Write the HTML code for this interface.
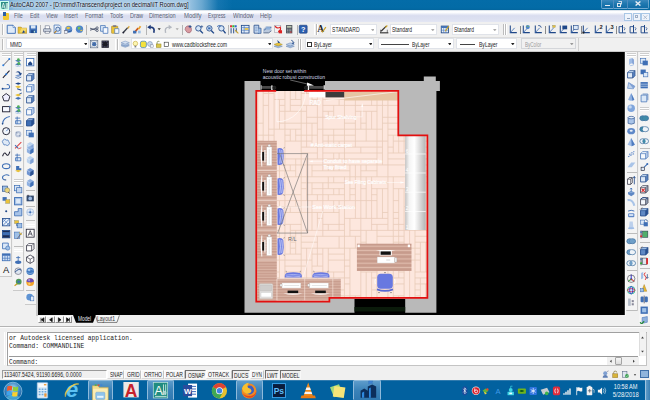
<!DOCTYPE html><html><head><meta charset="utf-8"><title>AutoCAD 2007</title><style>
html,body{margin:0;padding:0}
body{width:650px;height:400px;overflow:hidden;position:relative;background:#f0f0f0;font-family:"Liberation Sans",sans-serif;font-size:6px;color:#222}
.a{position:absolute}
.t{position:absolute;white-space:nowrap;line-height:1;transform-origin:0 0}
.cb{position:absolute;background:#fff;border:0.5px solid #b9bec9;box-sizing:border-box}
.sep{position:absolute;width:1px;background:#b8b8b8}
.sb{position:absolute;top:369.8px;height:9px;box-sizing:border-box;font-size:6.2px;line-height:8.5px;text-align:center;color:#222;letter-spacing:-0.2px}
.up{border:0.5px solid #fdfdfd;border-right-color:#c4c4c4;border-bottom-color:#d8d8d8;background:#f7f7f7}
.dn{border:0.7px solid #6e6e6e;border-right-color:#f8f8f8;border-bottom-color:#f8f8f8;background:#eeeeee}
</style></head><body>
<div class="a" style="left:0px;top:0px;width:650px;height:10.4px;background:linear-gradient(#046ca8,#036ba6 80%,#03659e)"></div>
<div class="a" style="left:0px;top:0px;width:232px;height:10.5px;background:linear-gradient(90deg,#4f92c6 0,#8ebcde 6%,#a6cae6 20%,#a6cae6 80%,rgba(140,188,222,.75) 87%,rgba(60,140,196,.3) 94%,rgba(3,107,166,0) 100%)"></div>
<div class="a" style="left:0px;top:0.5px;width:9px;height:9.5px;background:#2f8f86;border:0.5px solid #cfe;box-sizing:border-box"></div>
<svg class="a" style="left:0;top:.5px" width="9" height="9.500" viewBox="0 0 9 9.5"><path d="M1.600 8l1.800-6l1.800 6M2.300 6h2.200M6.300 2v6M7.600 2v6" stroke="#e8f6f2" stroke-width=".8" fill="none"/></svg>
<div class="t" style="left:10.2px;top:2.1px;font-size:6.4px;color:#0a0a14;transform:scaleX(0.896);text-shadow:0 0 2px rgba(255,255,255,.9),0 0 3px rgba(255,255,255,.7);">AutoCAD 2007 - [D:\mmd\Transcend\project on decimal\IT Room.dwg]</div>
<div class="a" style="left:600.5px;top:0px;width:48.5px;height:9px;background:linear-gradient(#3a88bc,#1f78b0 45%,#106ca6);border:0.5px solid rgba(160,200,230,.55);border-top:none;border-radius:0 0 2px 2px;box-sizing:border-box"></div>
<div class="a" style="left:613px;top:0px;width:0.7px;height:9px;background:#4f8cbf"></div>
<div class="a" style="left:626.5px;top:0px;width:0.7px;height:9px;background:#4f8cbf"></div>
<div class="a" style="left:604.6px;top:4.7px;width:5.3px;height:1.5px;background:#e4ecf4"></div>
<div class="a" style="left:616.8px;top:2.6px;width:3.8px;height:4px;border:0.9px solid #dbe6f0;box-sizing:border-box"></div>
<div class="a" style="left:618.2px;top:1.4px;width:3.6px;height:3.8px;border:0.8px solid #c4d6e6;border-left-color:transparent;border-bottom-color:transparent;box-sizing:border-box"></div>
<svg class="a" style="left:635.2px;top:1.3px" width="6" height="5" viewBox="0 0 6 5"><path d="M.6 .4L5.4 4.600M5.400 .4L.6 4.600" stroke="#e8eff6" stroke-width="1.3"/></svg>
<div class="a" style="left:0px;top:10.4px;width:650px;height:11.2px;background:linear-gradient(#b8c8d8 0,#fdfeff 8%,#fbfcfe 22%,#e6e9f5 36%,#d9ddef 48%,#dde1f1 80%,#e3e6f3 100%)"></div>
<div class="a" style="left:2.6px;top:13px;width:6.4px;height:7.4px;background:#f0c832;border-radius:1px"></div>
<div class="a" style="left:3px;top:11.6px;width:3.4px;height:4px;background:#2b5fa8"></div>
<div class="t" style="left:14.3px;top:13.1px;font-size:6.5px;color:#5b6476;transform:scaleX(0.831);">File</div>
<div class="t" style="left:29.5px;top:13.1px;font-size:6.5px;color:#5b6476;transform:scaleX(0.83);">Edit</div>
<div class="t" style="left:45.8px;top:13.1px;font-size:6.5px;color:#5b6476;transform:scaleX(0.837);">View</div>
<div class="t" style="left:63.8px;top:13.1px;font-size:6.5px;color:#5b6476;transform:scaleX(0.843);">Insert</div>
<div class="t" style="left:84.5px;top:13.1px;font-size:6.5px;color:#5b6476;transform:scaleX(0.874);">Format</div>
<div class="t" style="left:109.5px;top:13.1px;font-size:6.5px;color:#5b6476;transform:scaleX(0.857);">Tools</div>
<div class="t" style="left:129.5px;top:13.1px;font-size:6.5px;color:#5b6476;transform:scaleX(0.857);">Draw</div>
<div class="t" style="left:149.3px;top:13.1px;font-size:6.5px;color:#5b6476;transform:scaleX(0.869);">Dimension</div>
<div class="t" style="left:183.5px;top:13.1px;font-size:6.5px;color:#5b6476;transform:scaleX(0.914);">Modify</div>
<div class="t" style="left:208px;top:13.1px;font-size:6.5px;color:#5b6476;transform:scaleX(0.745);">Express</div>
<div class="t" style="left:232.5px;top:13.1px;font-size:6.5px;color:#5b6476;transform:scaleX(0.887);">Window</div>
<div class="t" style="left:260px;top:13.1px;font-size:6.5px;color:#5b6476;transform:scaleX(0.875);">Help</div>
<div class="a" style="left:624px;top:12.6px;width:8.4px;height:8.6px;background:#eef3fb;border:0.5px solid #a9c7e6;box-sizing:border-box"></div>
<div class="a" style="left:632.7px;top:12.6px;width:8.4px;height:8.6px;background:#eef3fb;border:0.5px solid #a9c7e6;box-sizing:border-box"></div>
<div class="a" style="left:641.4px;top:12.6px;width:8.4px;height:8.6px;background:#eef3fb;border:0.5px solid #a9c7e6;box-sizing:border-box"></div>
<div class="a" style="left:626.5px;top:18.3px;width:3px;height:0.8px;background:#8fa4c0"></div>
<div class="a" style="left:635.3px;top:15px;width:3px;height:3px;border:0.6px solid #9fb0c8;box-sizing:border-box"></div>
<svg class="a" style="left:643.4px;top:14.6px" width="4.600" height="4.600" viewBox="0 0 4.6 4.6"><path d="M.4 .4L4.200 4.200M4.200 .4L.4 4.200" stroke="#a4b2c6" stroke-width=".8"/></svg>
<div class="a" style="left:0px;top:22px;width:650px;height:30px;background:#f0f0f0"></div>
<div class="a" style="left:0px;top:36.6px;width:650px;height:0.7px;background:#dcdcdc"></div>
<div class="a" style="left:0px;top:51px;width:650px;height:1px;background:#c8c8c8"></div>
<div class="a" style="left:2px;top:23.5px;width:0.8px;height:11.5px;background:#bcbcbc"></div>
<div class="a" style="left:2.8px;top:23.5px;width:0.8px;height:11.5px;background:#fff"></div>
<svg class="a" style="left:5.80px;top:24.40px" width="10.4" height="10.4" viewBox="0 0 10 10"><path d="M1.2 1.2h5.600l2.200 2.200v5.600h-7.800z" fill="#dfeaf8" stroke="#3f6fb5" stroke-width=".9"/><path d="M6.800 1.200v2.200h2.200" fill="#fff" stroke="#3f6fb5" stroke-width=".6"/></svg>
<svg class="a" style="left:17.10px;top:24.40px" width="10.4" height="10.4" viewBox="0 0 10 10"><path d="M1 3h3l1 1h4.5v5h-8.5z" fill="#e9c23a" stroke="#a98520" stroke-width=".5"/><path d="M2.5 8l2-4h5l-2 4z" fill="#f3d96c"/><path d="M5 9l3-1-2-2z" fill="#1f4788"/></svg>
<svg class="a" style="left:28.00px;top:24.40px" width="10.4" height="10.4" viewBox="0 0 10 10"><rect x="1.3" y="1.3" width="7.4" height="7.4" fill="#3f6fb5"/><rect x="2.8" y="1.3" width="4.4" height="3" fill="#dbe8f7"/><rect x="3" y="6" width="4" height="2.7" fill="#1f4788"/><rect x="5.6" y="6.5" width="1" height="1.8" fill="#cfe"/></svg>
<svg class="a" style="left:41.60px;top:24.40px" width="10.4" height="10.4" viewBox="0 0 10 10"><rect x="1.5" y="4.5" width="7" height="3.2" rx=".6" fill="#c8cfdc" stroke="#56617a" stroke-width=".6"/><rect x="3" y="1.8" width="4" height="2.8" fill="#fff" stroke="#56617a" stroke-width=".5"/><rect x="3" y="7" width="4" height="1.8" fill="#fff" stroke="#56617a" stroke-width=".5"/></svg>
<svg class="a" style="left:52.30px;top:24.40px" width="10.4" height="10.4" viewBox="0 0 10 10"><path d="M2 1h5l1.5 1.5v6.5h-6.5z" fill="#e9f1fb" stroke="#3f6fb5" stroke-width=".7"/><circle cx="5.6" cy="5" r="2" fill="#cfe0f4" stroke="#1f4788" stroke-width=".7"/><path d="M4.2 6.6l-2 2.2" stroke="#b07820" stroke-width="1.1"/></svg>
<svg class="a" style="left:63.00px;top:24.40px" width="10.4" height="10.4" viewBox="0 0 10 10"><circle cx="5.5" cy="5" r="3.4" fill="#5f8fd0"/><path d="M3 3.5q2-1.5 4 0q-1 2-3 1.5z" fill="#e9c23a"/><path d="M2 6.5q3 2 6.5 0" stroke="#1f4788" stroke-width=".8" fill="none"/><rect x="1.5" y="6.5" width="3" height="2.5" fill="#e8eef8" stroke="#556" stroke-width=".4"/></svg>
<svg class="a" style="left:74.30px;top:24.40px" width="10.4" height="10.4" viewBox="0 0 10 10"><circle cx="5.3" cy="5" r="3.5" fill="#4f86cc"/><path d="M3.5 3q2-1 3 .5q-.5 2-2.5 2z" fill="#7cbf52"/><path d="M6 6.5q1.5 0 2-1" stroke="#e8c040" stroke-width="1" fill="none"/><path d="M1.5 7l2 2" stroke="#dde" stroke-width="1"/></svg>
<svg class="a" style="left:88.60px;top:24.40px" width="10.4" height="10.4" viewBox="0 0 10 10"><path d="M1 4l6 2M1 6l6-2" stroke="#3b4660" stroke-width=".8"/><circle cx="7.8" cy="3.8" r="1.1" fill="none" stroke="#3b4660" stroke-width=".7"/><circle cx="7.8" cy="6.2" r="1.1" fill="none" stroke="#3b4660" stroke-width=".7"/></svg>
<svg class="a" style="left:99.10px;top:24.40px" width="10.4" height="10.4" viewBox="0 0 10 10"><path d="M1.5 1.5h4.5v5.5h-4.5z" fill="#dbe8f7" stroke="#3f6fb5" stroke-width=".7"/><path d="M4 3.5h4.5v5.5h-4.5z" fill="#f4f8fd" stroke="#3f6fb5" stroke-width=".7"/></svg>
<svg class="a" style="left:109.80px;top:24.40px" width="10.4" height="10.4" viewBox="0 0 10 10"><rect x="1.5" y="2" width="6" height="7" rx=".6" fill="#e9c23a" stroke="#9a7a20" stroke-width=".5"/><rect x="3" y="1.2" width="3" height="1.6" fill="#778"/><path d="M4.5 4.5h4v4.5h-4z" fill="#f4f8fd" stroke="#3f6fb5" stroke-width=".6"/></svg>
<svg class="a" style="left:120.80px;top:24.40px" width="10.4" height="10.4" viewBox="0 0 10 10"><path d="M2 8.5l4.5-5" stroke="#3a3f4a" stroke-width="1.4"/><path d="M6 4l1.5-2.2l1 .8l-1.5 2z" fill="#d9a436"/><circle cx="2.2" cy="8.3" r=".9" fill="#223"/></svg>
<svg class="a" style="left:131.80px;top:24.40px" width="10.4" height="10.4" viewBox="0 0 10 10"><path d="M2 8.5l4-4.5" stroke="#c8541c" stroke-width="1.6"/><path d="M5.5 4.5l2-2.8l1.4 1l-2 2.6z" fill="#e8a02c"/><rect x="1" y="6.5" width="3.2" height="2.6" fill="#3f6fb5"/><rect x="5.8" y="6.4" width="2.6" height="2.6" fill="#9fc0e6"/></svg>
<svg class="a" style="left:145.80px;top:24.40px" width="10.4" height="10.4" viewBox="0 0 10 10"><path d="M7.5 8.5q1.5-5.5-3.5-5.5" fill="none" stroke="#1c3878" stroke-width="1.6"/><path d="M1.2 3.2l3.3-2.4v4.6z" fill="#1c3878"/></svg>
<svg class="a" style="left:154.30px;top:24.40px" width="10.4" height="10.4" viewBox="0 0 10 10"><path d="M3.5 4.2h3l-1.5 1.8z" fill="#333"/></svg>
<svg class="a" style="left:163.30px;top:24.40px" width="10.4" height="10.4" viewBox="0 0 10 10"><path d="M2.5 8.5q-1.5-5.5 3.5-5.5" fill="none" stroke="#b4b8c0" stroke-width="1.4"/><path d="M8.8 3.2l-3.3-2.4v4.6z" fill="#b4b8c0"/></svg>
<svg class="a" style="left:171.50px;top:24.40px" width="10.4" height="10.4" viewBox="0 0 10 10"><path d="M3.5 4.2h3l-1.5 1.8z" fill="#aaa"/></svg>
<svg class="a" style="left:182.80px;top:24.40px" width="10.4" height="10.4" viewBox="0 0 10 10"><path d="M2 5.5q0-3 2-3.5q3-1 4 2q.8 3-1.5 4.5q-2.5 1-4.5-3z" fill="#d99aa0" stroke="#8a4a58" stroke-width=".5"/><path d="M6.8 1v3M5.3 2.5h3" stroke="#1f4788" stroke-width=".8"/></svg>
<svg class="a" style="left:193.80px;top:24.40px" width="10.4" height="10.4" viewBox="0 0 10 10"><circle cx="4.2" cy="4.2" r="2.6" fill="#d6e5f6" stroke="#1f4788" stroke-width=".8"/><path d="M6 6.2l2.6 2.8" stroke="#1f4788" stroke-width="1.3"/><path d="M7.5 1.2v2.6M6.2 2.5h2.6" stroke="#1f4788" stroke-width=".6"/></svg>
<svg class="a" style="left:204.80px;top:24.40px" width="10.4" height="10.4" viewBox="0 0 10 10"><circle cx="4.2" cy="4.2" r="2.6" fill="#d6e5f6" stroke="#1f4788" stroke-width=".8"/><path d="M6 6.2l2.6 2.8" stroke="#1f4788" stroke-width="1.3"/><rect x="3" y="3.2" width="2.4" height="2" fill="#3f6fb5"/></svg>
<svg class="a" style="left:215.80px;top:24.40px" width="10.4" height="10.4" viewBox="0 0 10 10"><circle cx="5.2" cy="4.2" r="2.6" fill="#d6e5f6" stroke="#1f4788" stroke-width=".8"/><path d="M7 6.2l2.2 2.8" stroke="#1f4788" stroke-width="1.3"/><path d="M1 2.5q2-2 4-.5" stroke="#3f6fb5" stroke-width=".9" fill="none"/></svg>
<svg class="a" style="left:228.80px;top:24.40px" width="10.4" height="10.4" viewBox="0 0 10 10"><rect x="1" y="1.2" width="2" height="2" fill="#d33"/><rect x="3.2" y="1.2" width="2" height="2" fill="#3b3"/><rect x="5.4" y="1.2" width="2" height="2" fill="#36c"/><path d="M2 4v5M4.5 4v5M7 4v4" stroke="#1f4788" stroke-width=".9"/><path d="M6 6l3 3" stroke="#c9a227" stroke-width="1"/></svg>
<svg class="a" style="left:240.30px;top:24.40px" width="10.4" height="10.4" viewBox="0 0 10 10"><rect x="1.3" y="1.3" width="7.4" height="7.4" fill="#e4eefa" stroke="#1f4788" stroke-width=".8"/><path d="M1.3 3.5h7.4M4 1.3v7.4M1.3 6h7.4" stroke="#3f6fb5" stroke-width=".6"/><rect x="4.6" y="4" width="3.4" height="1.6" fill="#e9c23a"/></svg>
<svg class="a" style="left:251.50px;top:24.40px" width="10.4" height="10.4" viewBox="0 0 10 10"><path d="M2 1.2h4.5v7.6h-4.5z" fill="#e4eefa" stroke="#1f4788" stroke-width=".8"/><path d="M3 3h2.5M3 4.8h2.5M3 6.6h2.5" stroke="#3f6fb5" stroke-width=".7"/><path d="M6.5 4h2.2v5h-3" fill="#9fc0e6" stroke="#1f4788" stroke-width=".6"/></svg>
<svg class="a" style="left:262.30px;top:24.40px" width="10.4" height="10.4" viewBox="0 0 10 10"><path d="M1 5l3-3h5v5l-3 2h-5z" fill="#b9c8dc"/><path d="M2 6l3-2.5h4" stroke="#1f4788" stroke-width=".7" fill="none"/><path d="M1.5 8.5h5l2.5-2" stroke="#5a6a88" stroke-width=".8" fill="none"/><rect x="4" y="3" width="4" height="2.4" fill="#8fb0da"/></svg>
<svg class="a" style="left:273.30px;top:24.40px" width="10.4" height="10.4" viewBox="0 0 10 10"><rect x="1.5" y="1.5" width="6" height="6.5" fill="#f2f2f2" stroke="#99a" stroke-width=".5"/><path d="M2 2q2 3 5 1q1 3-2 4.5" stroke="#d22" stroke-width="1.1" fill="none"/><rect x="5.5" y="6" width="3.2" height="3" fill="#d22"/></svg>
<svg class="a" style="left:283.80px;top:24.40px" width="10.4" height="10.4" viewBox="0 0 10 10"><rect x="2" y="1" width="6" height="8" fill="#4a4f58"/><rect x="2.8" y="1.8" width="4.4" height="1.8" fill="#b9c4b0"/><path d="M3 5h4M3 6.4h4M3 7.8h4" stroke="#c8ccd2" stroke-width=".7" stroke-dasharray="1 .5"/><rect x="6" y="7.2" width="1.2" height="1.2" fill="#d33"/></svg>
<svg class="a" style="left:298.30px;top:24.40px" width="10.4" height="10.4" viewBox="0 0 10 10"><rect x="1.2" y="1.2" width="7.6" height="7.6" rx=".8" fill="#2c5fb0" stroke="#173c7c" stroke-width=".6"/><text x="5" y="7.6" font-size="7" font-weight="bold" fill="#fff" text-anchor="middle" font-family="Liberation Sans,sans-serif">?</text></svg>
<div class="a" style="left:40px;top:25px;width:0.7px;height:9.5px;background:#b4b4b4"></div>
<div class="a" style="left:86px;top:25px;width:0.7px;height:9.5px;background:#b4b4b4"></div>
<div class="a" style="left:146.3px;top:25px;width:0.7px;height:9.5px;background:#b4b4b4"></div>
<div class="a" style="left:181.7px;top:25px;width:0.7px;height:9.5px;background:#b4b4b4"></div>
<div class="a" style="left:228.3px;top:25px;width:0.7px;height:9.5px;background:#b4b4b4"></div>
<div class="a" style="left:296.5px;top:25px;width:0.7px;height:9.5px;background:#b4b4b4"></div>
<div class="a" style="left:313.6px;top:23.5px;width:0.8px;height:11.5px;background:#bcbcbc"></div>
<div class="a" style="left:314.40000000000003px;top:23.5px;width:0.8px;height:11.5px;background:#fff"></div>
<div class="a" style="left:316px;top:23.5px;width:0.8px;height:11.5px;background:#bcbcbc"></div>
<div class="a" style="left:316.8px;top:23.5px;width:0.8px;height:11.5px;background:#fff"></div>
<svg class="a" style="left:316.80px;top:24.40px" width="10.4" height="10.4" viewBox="0 0 10 10"><text x="3.5" y="8" font-size="9" font-weight="bold" fill="#222" text-anchor="middle" font-family="Liberation Serif,serif">A</text><path d="M5 8l3.5-5" stroke="#c9a227" stroke-width="1.1"/></svg>
<div class="a" style="left:329.5px;top:24.2px;width:47px;height:10.8px;background:#fff;border:0.6px solid #e0e3e9;box-sizing:border-box"></div>
<svg class="a" style="left:370.7px;top:28.700000000000003px" width="3.6" height="2.6" viewBox="0 0 4 3"><path d="M0 0h4l-2 2.8z" fill="#aaa"/></svg>
<div class="t" style="left:332px;top:26.2px;font-size:7px;color:#222;transform:scaleX(0.727);">STANDARD</div>
<svg class="a" style="left:378.80px;top:24.40px" width="10.4" height="10.4" viewBox="0 0 10 10"><path d="M1 8.5h8" stroke="#222" stroke-width="1"/><path d="M2 7l5-5" stroke="#333" stroke-width="1.2"/><path d="M1.5 5.5v3M8 5.5v3" stroke="#333" stroke-width=".6"/><path d="M6 3.5l2-2" stroke="#c9a227" stroke-width="1.2"/></svg>
<div class="a" style="left:390.3px;top:24.2px;width:46.6px;height:10.8px;background:#fff;border:0.6px solid #e0e3e9;box-sizing:border-box"></div>
<svg class="a" style="left:431.1px;top:28.700000000000003px" width="3.6" height="2.6" viewBox="0 0 4 3"><path d="M0 0h4l-2 2.8z" fill="#aaa"/></svg>
<div class="t" style="left:392.2px;top:26.2px;font-size:7px;color:#222;transform:scaleX(0.704);">Standard</div>
<svg class="a" style="left:440.30px;top:24.40px" width="10.4" height="10.4" viewBox="0 0 10 10"><rect x="1.2" y="2" width="7" height="6.5" fill="#e8f0fa" stroke="#1f4788" stroke-width=".8"/><rect x="1.2" y="2" width="7" height="1.8" fill="#3f6fb5"/><path d="M3.5 3.8v4.7M5.8 3.8v4.7M1.2 6h7" stroke="#3f6fb5" stroke-width=".5"/><path d="M5 7l3.5-5" stroke="#c9a227" stroke-width="1.1"/></svg>
<div class="a" style="left:451.8px;top:24.2px;width:47.4px;height:10.8px;background:#fff;border:0.6px solid #e0e3e9;box-sizing:border-box"></div>
<svg class="a" style="left:493.4px;top:28.700000000000003px" width="3.6" height="2.6" viewBox="0 0 4 3"><path d="M0 0h4l-2 2.8z" fill="#aaa"/></svg>
<div class="t" style="left:453.5px;top:26.2px;font-size:7px;color:#222;transform:scaleX(0.704);">Standard</div>
<div class="a" style="left:503px;top:23.5px;width:0.8px;height:11.5px;background:#bcbcbc"></div>
<div class="a" style="left:503.8px;top:23.5px;width:0.8px;height:11.5px;background:#fff"></div>
<div class="a" style="left:505.4px;top:23.5px;width:0.8px;height:11.5px;background:#bcbcbc"></div>
<div class="a" style="left:506.2px;top:23.5px;width:0.8px;height:11.5px;background:#fff"></div>
<svg class="a" style="left:507.50px;top:24.40px" width="10.4" height="10.4" viewBox="0 0 10 10"><path d="M2.2 1.5v6.8h6.3" fill="none" stroke="#1f4788" stroke-width="1"/><path d="M2.2 8.3l4.2-4.6" stroke="#3f6fb5" stroke-width=".8"/></svg>
<svg class="a" style="left:521.30px;top:24.40px" width="10.4" height="10.4" viewBox="0 0 10 10"><path d="M2.2 1.5v6.8h6.3" fill="none" stroke="#1f4788" stroke-width="1"/><path d="M2.2 8.3l4.2-4.6" stroke="#3f6fb5" stroke-width=".8"/><circle cx="6.5" cy="3" r="2" fill="#4f86cc"/><path d="M5.5 2.5q1-1 2 0" stroke="#7cbf52" stroke-width=".8" fill="none"/></svg>
<svg class="a" style="left:532.50px;top:24.40px" width="10.4" height="10.4" viewBox="0 0 10 10"><path d="M2.2 1.5v6.8h6.3" fill="none" stroke="#1f4788" stroke-width="1"/><path d="M2.2 8.3l4.2-4.6" stroke="#3f6fb5" stroke-width=".8"/><path d="M5 1.5q2.5-.5 3 2" stroke="#1f4788" stroke-width=".8" fill="none"/></svg>
<svg class="a" style="left:546.80px;top:24.40px" width="10.4" height="10.4" viewBox="0 0 10 10"><path d="M2.2 1.5v6.8h6.3" fill="none" stroke="#1f4788" stroke-width="1"/><path d="M2.2 8.3l4.2-4.6" stroke="#3f6fb5" stroke-width=".8"/><rect x="5.5" y="1.3" width="2.5" height="2" fill="#e9c23a" stroke="#775" stroke-width=".3"/></svg>
<svg class="a" style="left:557.50px;top:24.40px" width="10.4" height="10.4" viewBox="0 0 10 10"><path d="M2.2 1.5v6.8h6.3" fill="none" stroke="#1f4788" stroke-width="1"/><path d="M2.2 8.3l4.2-4.6" stroke="#3f6fb5" stroke-width=".8"/><rect x="4.2" y="1.5" width="4.6" height="3.6" fill="#1f4788"/></svg>
<svg class="a" style="left:568.50px;top:24.40px" width="10.4" height="10.4" viewBox="0 0 10 10"><path d="M2.2 1.5v6.8h6.3" fill="none" stroke="#1f4788" stroke-width="1"/><path d="M2.2 8.3l4.2-4.6" stroke="#3f6fb5" stroke-width=".8"/><rect x="4.2" y="1.5" width="4.6" height="3.6" fill="#dbe8f7" stroke="#1f4788" stroke-width=".6"/></svg>
<svg class="a" style="left:581.30px;top:24.40px" width="10.4" height="10.4" viewBox="0 0 10 10"><path d="M2.2 1.5v6.8h6.3" fill="none" stroke="#1f4788" stroke-width="1"/><path d="M2.2 8.3l4.2-4.6" stroke="#3f6fb5" stroke-width=".8"/><rect x="1.4" y="7.4" width="1.8" height="1.8" fill="#222"/></svg>
<svg class="a" style="left:592.50px;top:24.40px" width="10.4" height="10.4" viewBox="0 0 10 10"><path d="M2.2 1.5v6.8h6.3" fill="none" stroke="#1f4788" stroke-width="1"/><path d="M2.2 8.3l4.2-4.6" stroke="#3f6fb5" stroke-width=".8"/><text x="7.8" y="4.4" font-size="5" font-weight="bold" fill="#111" font-family="Liberation Sans,sans-serif" text-anchor="middle">2</text></svg>
<svg class="a" style="left:603.50px;top:24.40px" width="10.4" height="10.4" viewBox="0 0 10 10"><path d="M2.2 1.5v6.8h6.3" fill="none" stroke="#1f4788" stroke-width="1"/><path d="M2.2 8.3l4.2-4.6" stroke="#3f6fb5" stroke-width=".8"/><text x="7.8" y="4.4" font-size="5" font-weight="bold" fill="#111" font-family="Liberation Sans,sans-serif" text-anchor="middle">3</text></svg>
<svg class="a" style="left:616.80px;top:24.40px" width="10.4" height="10.4" viewBox="0 0 10 10"><path d="M2 2.5v6h6.5" fill="none" stroke="#1f4788" stroke-width=".9"/><path d="M5.3 1v7.5" stroke="#1f4788" stroke-width="1"/><path d="M2 2.5h3.3" stroke="#1f4788" stroke-width=".8"/><path d="M6.5 3q2 1 .5 3" stroke="#1f4788" stroke-width=".7" fill="none"/></svg>
<svg class="a" style="left:627.80px;top:24.40px" width="10.4" height="10.4" viewBox="0 0 10 10"><path d="M2 2.5v6h6.5" fill="none" stroke="#1f4788" stroke-width=".9"/><path d="M5.3 1v7.5" stroke="#1f4788" stroke-width="1"/><path d="M2 2.5h3.3" stroke="#1f4788" stroke-width=".8"/><path d="M6.5 3q2 1 .5 3" stroke="#1f4788" stroke-width=".7" fill="none"/></svg>
<svg class="a" style="left:639.30px;top:24.40px" width="10.4" height="10.4" viewBox="0 0 10 10"><path d="M2 2.5v6h6.5" fill="none" stroke="#1f4788" stroke-width=".9"/><path d="M5.3 1v7.5" stroke="#1f4788" stroke-width="1"/><path d="M2 2.5h3.3" stroke="#1f4788" stroke-width=".8"/><path d="M6.5 3q2 1 .5 3" stroke="#1f4788" stroke-width=".7" fill="none"/></svg>
<div class="a" style="left:519.5px;top:25.5px;width:0.7px;height:8.5px;background:#8a8a8a"></div>
<div class="a" style="left:545px;top:25.5px;width:0.7px;height:8.5px;background:#8a8a8a"></div>
<div class="a" style="left:580.7px;top:25.5px;width:0.7px;height:8.5px;background:#8a8a8a"></div>
<div class="a" style="left:615.5px;top:25.5px;width:0.7px;height:8.5px;background:#8a8a8a"></div>
<div class="a" style="left:2px;top:38.5px;width:0.8px;height:11.0px;background:#bcbcbc"></div>
<div class="a" style="left:2.8px;top:38.5px;width:0.8px;height:11.0px;background:#fff"></div>
<div class="a" style="left:6.3px;top:38.2px;width:83px;height:11px;background:#fff;border:0.6px solid #e0e3e9;box-sizing:border-box"></div>
<svg class="a" style="left:83.5px;top:42.800000000000004px" width="3.6" height="2.6" viewBox="0 0 4 3"><path d="M0 0h4l-2 2.8z" fill="#222"/></svg>
<div class="t" style="left:10.4px;top:41px;font-size:7px;color:#222;transform:scaleX(0.706);">MMD</div>
<svg class="a" style="left:89.30px;top:39.00px" width="10.4" height="10.4" viewBox="0 0 10 10"><rect x="1.5" y="1.5" width="7" height="7" fill="#dfe6ee" stroke="#5a6a80" stroke-width=".6"/><circle cx="5" cy="5" r="2" fill="#3f6fb5"/><path d="M2 2l6 6M8 2l-6 6" stroke="#5a6a80" stroke-width=".4"/></svg>
<svg class="a" style="left:100.30px;top:39.00px" width="10.4" height="10.4" viewBox="0 0 10 10"><rect x="1.5" y="1.5" width="7" height="7" fill="#1c1c24"/><path d="M2.5 2.5h5v5h-5z" fill="none" stroke="#668" stroke-width=".7" stroke-dasharray="1 .6"/></svg>
<div class="a" style="left:114.6px;top:38.5px;width:0.8px;height:11.0px;background:#bcbcbc"></div>
<div class="a" style="left:115.39999999999999px;top:38.5px;width:0.8px;height:11.0px;background:#fff"></div>
<div class="a" style="left:117px;top:38.5px;width:0.8px;height:11.0px;background:#bcbcbc"></div>
<div class="a" style="left:117.8px;top:38.5px;width:0.8px;height:11.0px;background:#fff"></div>
<svg class="a" style="left:119.80px;top:39.00px" width="10.4" height="10.4" viewBox="0 0 10 10"><path d="M1 6.5l4-1.5l4 1.5l-4 1.5z" fill="#9fb7d8" stroke="#5b7cae" stroke-width=".4"/><path d="M1 5l4-1.5l4 1.5l-4 1.5z" fill="#b9cce6" stroke="#5b7cae" stroke-width=".4"/><path d="M1 3.5l4-1.5l4 1.5l-4 1.5z" fill="#d6e2f2" stroke="#5b7cae" stroke-width=".4"/></svg>
<div class="a" style="left:130.8px;top:38.2px;width:142.5px;height:11px;background:#fff;border:0.6px solid #e0e3e9;box-sizing:border-box"></div>
<svg class="a" style="left:267.5px;top:42.800000000000004px" width="3.6" height="2.6" viewBox="0 0 4 3"><path d="M0 0h4l-2 2.8z" fill="#222"/></svg>
<svg class="a" style="left:131.30px;top:39.80px" width="8.8" height="8.8" viewBox="0 0 10 10"><circle cx="5" cy="4" r="2.6" fill="#fdf6b0" stroke="#b99b28" stroke-width=".6"/><rect x="4" y="6.5" width="2" height="2" fill="#7a7f8a"/></svg>
<svg class="a" style="left:138.80px;top:39.80px" width="8.8" height="8.8" viewBox="0 0 10 10"><rect x="1.600" y="1.400" width="6.800" height="7.200" rx="2" fill="#f4e23c" stroke="#3f7fb4" stroke-width=".8"/></svg>
<svg class="a" style="left:146.30px;top:39.80px" width="8.8" height="8.8" viewBox="0 0 10 10"><circle cx="4.5" cy="4.5" r="2.8" fill="#c8d8ec" stroke="#6b86b0" stroke-width=".6"/><rect x="5" y="5.5" width="3.5" height="3" fill="#e8eef6" stroke="#667" stroke-width=".4"/></svg>
<svg class="a" style="left:153.90px;top:39.80px" width="8.8" height="8.8" viewBox="0 0 10 10"><rect x="2.5" y="4.5" width="5.5" height="4" fill="#d8c64a" stroke="#8a7a1c" stroke-width=".5"/><path d="M3.5 4.5v-1.5q0-1.5 1.5-1.5q1 0 1.3.8" fill="none" stroke="#6a7a3a" stroke-width=".8"/></svg>
<svg class="a" style="left:162.30px;top:39.80px" width="8.8" height="8.8" viewBox="0 0 10 10"><rect x="2.5" y="2.5" width="5" height="5" fill="#fff" stroke="#333" stroke-width=".7"/></svg>
<div class="t" style="left:171.7px;top:41px;font-size:7px;color:#222;transform:scaleX(0.733);">www.cadblocksfree.com</div>
<svg class="a" style="left:273.30px;top:39.00px" width="10.4" height="10.4" viewBox="0 0 10 10"><path d="M1 7l4-1.5l4 1.5l-4 1.5z" fill="#9fb7d8" stroke="#5b7cae" stroke-width=".4"/><path d="M1 5.2l4-1.5l4 1.5l-4 1.5z" fill="#e9c23a" stroke="#a08820" stroke-width=".4"/><path d="M4 1l3 2.5l-2 .3z" fill="#1f4788"/></svg>
<svg class="a" style="left:285.30px;top:39.00px" width="10.4" height="10.4" viewBox="0 0 10 10"><path d="M1 7l4-1.5l4 1.5l-4 1.5z" fill="#9fb7d8" stroke="#5b7cae" stroke-width=".4"/><path d="M1 5.2l4-1.5l4 1.5l-4 1.5z" fill="#b9cce6" stroke="#5b7cae" stroke-width=".4"/><path d="M6 1.2q2.5.5 2 3.2M8 4.5l-1.4-.6M8 4.5l.7-1.3" stroke="#1f4788" stroke-width=".8" fill="none"/></svg>
<div class="a" style="left:297.8px;top:38.5px;width:0.8px;height:11.0px;background:#bcbcbc"></div>
<div class="a" style="left:298.6px;top:38.5px;width:0.8px;height:11.0px;background:#fff"></div>
<div class="a" style="left:300.2px;top:38.5px;width:0.8px;height:11.0px;background:#bcbcbc"></div>
<div class="a" style="left:301.0px;top:38.5px;width:0.8px;height:11.0px;background:#fff"></div>
<div class="a" style="left:304.8px;top:38.2px;width:69.5px;height:11px;background:#fff;border:0.6px solid #e0e3e9;box-sizing:border-box"></div>
<svg class="a" style="left:368.5px;top:42.800000000000004px" width="3.6" height="2.6" viewBox="0 0 4 3"><path d="M0 0h4l-2 2.8z" fill="#222"/></svg>
<div class="a" style="left:307px;top:41.8px;width:4.6px;height:4.8px;border:0.6px solid #333;box-sizing:border-box;background:#fff"></div>
<div class="t" style="left:313.6px;top:41px;font-size:7px;color:#222;transform:scaleX(0.701);">ByLayer</div>
<div class="a" style="left:378px;top:38.2px;width:75.6px;height:11px;background:#fff;border:0.6px solid #e0e3e9;box-sizing:border-box"></div>
<svg class="a" style="left:447.8px;top:42.800000000000004px" width="3.6" height="2.6" viewBox="0 0 4 3"><path d="M0 0h4l-2 2.8z" fill="#222"/></svg>
<div class="a" style="left:381px;top:43.9px;width:27.5px;height:0.7px;background:#444"></div>
<div class="t" style="left:411.5px;top:41px;font-size:7px;color:#222;transform:scaleX(0.681);">ByLayer</div>
<div class="a" style="left:456px;top:38.2px;width:61px;height:11px;background:#fff;border:0.6px solid #e0e3e9;box-sizing:border-box"></div>
<svg class="a" style="left:511.2px;top:42.800000000000004px" width="3.6" height="2.6" viewBox="0 0 4 3"><path d="M0 0h4l-2 2.8z" fill="#222"/></svg>
<div class="a" style="left:459.7px;top:43.9px;width:15px;height:0.7px;background:#444"></div>
<div class="t" style="left:478.5px;top:41px;font-size:7px;color:#222;transform:scaleX(0.72);">ByLayer</div>
<div class="a" style="left:520.6px;top:38.2px;width:55.2px;height:11px;background:#f1f1f1;border:0.6px solid #d4d6da;box-sizing:border-box"></div>
<svg class="a" style="left:570.0000000000001px;top:42.800000000000004px" width="3.6" height="2.6" viewBox="0 0 4 3"><path d="M0 0h4l-2 2.8z" fill="#999"/></svg>
<div class="t" style="left:524.5px;top:41px;font-size:7px;color:#9a9a9a;transform:scaleX(0.651);">ByColor</div>
<div class="a" style="left:577.5px;top:37.5px;width:0.8px;height:13.5px;background:#d0d0d0"></div>
<div class="a" style="left:0px;top:52px;width:37.5px;height:278px;background:#f0f0f0"></div>
<div class="a" style="left:0px;top:52px;width:11.8px;height:225px;background:#f4f4f4;border-right:0.8px solid #cacaca;border-bottom:0.8px solid #cacaca;box-sizing:border-box"></div>
<div class="a" style="left:12.6px;top:52px;width:11.8px;height:239px;background:#f4f4f4;border-right:0.8px solid #cacaca;border-bottom:0.8px solid #cacaca;box-sizing:border-box"></div>
<div class="a" style="left:25.2px;top:52px;width:11.4px;height:253px;background:#f4f4f4;border-bottom:0.8px solid #cacaca;box-sizing:border-box"></div>
<div class="a" style="left:36.3px;top:52px;width:1.5px;height:264px;background:#c8c8c8"></div>
<div class="a" style="left:1.5px;top:52.8px;width:9px;height:0.8px;background:#cdcdcd"></div>
<div class="a" style="left:1.5px;top:53.599999999999994px;width:9px;height:0.6px;background:#fff"></div>
<div class="a" style="left:1.5px;top:54.8px;width:9px;height:0.8px;background:#cdcdcd"></div>
<div class="a" style="left:1.5px;top:55.599999999999994px;width:9px;height:0.6px;background:#fff"></div>
<div class="a" style="left:14px;top:52.8px;width:9px;height:0.8px;background:#cdcdcd"></div>
<div class="a" style="left:14px;top:53.599999999999994px;width:9px;height:0.6px;background:#fff"></div>
<div class="a" style="left:14px;top:54.8px;width:9px;height:0.8px;background:#cdcdcd"></div>
<div class="a" style="left:14px;top:55.599999999999994px;width:9px;height:0.6px;background:#fff"></div>
<div class="a" style="left:26.5px;top:52.8px;width:9px;height:0.8px;background:#cdcdcd"></div>
<div class="a" style="left:26.5px;top:53.599999999999994px;width:9px;height:0.6px;background:#fff"></div>
<div class="a" style="left:26.5px;top:54.8px;width:9px;height:0.8px;background:#cdcdcd"></div>
<div class="a" style="left:26.5px;top:55.599999999999994px;width:9px;height:0.6px;background:#fff"></div>
<svg class="a" style="left:0.50px;top:56.80px" width="10.4" height="10.4" viewBox="0 0 10 10"><path d="M2.200 8l5.800-6" stroke="#445" stroke-width=".8"/><circle cx="2.200" cy="8" r="1" fill="#2f7fe0"/><circle cx="8" cy="2" r="1" fill="#2f7fe0"/></svg>
<svg class="a" style="left:0.50px;top:68.50px" width="10.4" height="10.4" viewBox="0 0 10 10"><path d="M1.800 8.600l6.400-7" stroke="#223" stroke-width="1"/><circle cx="5" cy="5.100" r="1" fill="#2f7fe0"/></svg>
<svg class="a" style="left:0.50px;top:80.50px" width="10.4" height="10.4" viewBox="0 0 10 10"><path d="M1.5 7.5h5q2.5-.5 1.5-3q-.5-1.5-2.5-1" fill="none" stroke="#3f6fb5" stroke-width="1"/><circle cx="1.5" cy="7.5" r=".9" fill="#1f4788"/></svg>
<svg class="a" style="left:0.50px;top:91.80px" width="10.4" height="10.4" viewBox="0 0 10 10"><path d="M5 1.5l3.6 2.7l-1.4 4.3h-4.4l-1.4-4.3z" fill="#eef" stroke="#223" stroke-width=".9"/></svg>
<svg class="a" style="left:0.50px;top:103.50px" width="10.4" height="10.4" viewBox="0 0 10 10"><rect x="1.5" y="2.5" width="7" height="5" fill="#f6f8ff" stroke="#223" stroke-width=".9"/><circle cx="8.5" cy="2.5" r=".8" fill="#3f6fb5"/></svg>
<svg class="a" style="left:0.50px;top:114.80px" width="10.4" height="10.4" viewBox="0 0 10 10"><path d="M1.5 8.5q.5-6 7-7" fill="none" stroke="#3f6fb5" stroke-width="1.1"/><circle cx="1.5" cy="8.5" r=".8" fill="#1f4788"/></svg>
<svg class="a" style="left:0.50px;top:125.80px" width="10.4" height="10.4" viewBox="0 0 10 10"><circle cx="5" cy="5" r="3.4" fill="#f2f6fc" stroke="#223" stroke-width=".9"/><path d="M5 5l2.4-2.4" stroke="#3f6fb5" stroke-width=".8"/></svg>
<svg class="a" style="left:0.50px;top:137.30px" width="10.4" height="10.4" viewBox="0 0 10 10"><path d="M2 3q1.5-2 3 0q2-1 2.5 1.5q1.5 1.5 0 3q-1.5 1.5-3 0q-2 1-2.5-1.5q-1.5-1.5 0-3z" fill="#dfe9f6" stroke="#3f6fb5" stroke-width=".7"/></svg>
<svg class="a" style="left:0.50px;top:149.30px" width="10.4" height="10.4" viewBox="0 0 10 10"><path d="M1.5 7q1.5-5 3.5-2t3.5-2.5" fill="none" stroke="#223" stroke-width="1"/></svg>
<svg class="a" style="left:0.50px;top:160.80px" width="10.4" height="10.4" viewBox="0 0 10 10"><ellipse cx="5" cy="5" rx="3.6" ry="2.4" fill="none" stroke="#3f6fb5" stroke-width="1.1"/></svg>
<svg class="a" style="left:0.50px;top:172.30px" width="10.4" height="10.4" viewBox="0 0 10 10"><path d="M8 3.5q-3-2-6 .5q-1.5 2 1 3.5" fill="none" stroke="#3f6fb5" stroke-width="1.1"/><path d="M3 7.5l2 .2" stroke="#1f4788" stroke-width="1"/></svg>
<svg class="a" style="left:0.50px;top:183.50px" width="10.4" height="10.4" viewBox="0 0 10 10"><rect x="1.3" y="2" width="5" height="5" fill="#9fc0e6" stroke="#1f4788" stroke-width=".6"/><circle cx="6" cy="6" r="2.4" fill="#e9d37a" stroke="#776" stroke-width=".5"/><path d="M7 8l1.5 1" stroke="#223" stroke-width=".8"/></svg>
<svg class="a" style="left:0.50px;top:194.80px" width="10.4" height="10.4" viewBox="0 0 10 10"><rect x="1.5" y="2" width="4" height="3.5" fill="#3f6fb5"/><rect x="4.5" y="4.5" width="4" height="3.5" fill="#e9c23a" stroke="#886" stroke-width=".4"/></svg>
<svg class="a" style="left:0.50px;top:205.80px" width="10.4" height="10.4" viewBox="0 0 10 10"><circle cx="5" cy="5" r="1" fill="#1f4788"/></svg>
<svg class="a" style="left:0.50px;top:217.30px" width="10.4" height="10.4" viewBox="0 0 10 10"><rect x="1.5" y="1.5" width="7" height="7" fill="#e8f0fb" stroke="#1f4788" stroke-width=".8"/><path d="M1.5 5l3.5-3.5M1.5 8.5l7-7M5 8.5l3.5-3.5" stroke="#3f6fb5" stroke-width=".7"/><path d="M1.5 1.5l7 7" stroke="#3f6fb5" stroke-width=".5"/></svg>
<svg class="a" style="left:0.50px;top:229.30px" width="10.4" height="10.4" viewBox="0 0 10 10"><rect x="1.5" y="1.5" width="7" height="7" fill="#1c2c54" stroke="#1f4788" stroke-width=".8"/><rect x="1.5" y="3" width="7" height="3" fill="#3f6fb5"/></svg>
<svg class="a" style="left:0.50px;top:240.80px" width="10.4" height="10.4" viewBox="0 0 10 10"><path d="M1.5 2h5.5v5.5h-5.5z" fill="#dbe8f7" stroke="#3f6fb5" stroke-width=".8"/><circle cx="6.5" cy="6.8" r="2" fill="#9fc0e6" stroke="#3f6fb5" stroke-width=".6"/></svg>
<svg class="a" style="left:0.50px;top:252.30px" width="10.4" height="10.4" viewBox="0 0 10 10"><rect x="1.3" y="1.8" width="7.4" height="6.6" fill="#cfe0f6" stroke="#3f6fb5" stroke-width=".8"/><rect x="1.3" y="1.8" width="7.4" height="1.8" fill="#3f6fb5"/><path d="M3.8 3.6v4.8M6.2 3.6v4.8M1.3 6h7.4" stroke="#3f6fb5" stroke-width=".6"/></svg>
<svg class="a" style="left:0.50px;top:263.50px" width="10.4" height="10.4" viewBox="0 0 10 10"><text x="5" y="8.400" font-size="9" fill="#111" text-anchor="middle" font-family="Liberation Sans,sans-serif">A</text></svg>
<svg class="a" style="left:12.80px;top:56.80px" width="10.4" height="10.4" viewBox="0 0 10 10"><path d="M2 3.600l3-1.300l3 1.300l-3 1.300z" fill="#3f6fb5"/><circle cx="5.200" cy="2.600" r="1.300" fill="#4fae5c"/><path d="M2 7l3-1.300l3 1.300l-3 1.300z" fill="#3f6fb5"/><circle cx="5.600" cy="6.200" r="1.400" fill="#4fae5c"/><path d="M2.200 8.400l2.800 1l3-1.200" stroke="#9fc0e6" stroke-width=".7" fill="none"/></svg>
<svg class="a" style="left:12.80px;top:68.50px" width="10.4" height="10.4" viewBox="0 0 10 10"><path d="M2.400 3.400q3.400-2.600 5.200.6l1-.4l-1 2.600l-2.400-1.400l1-.4q-1.400-1.800-3.800-1z" fill="#1f4788"/><path d="M2 6.400l3-1.200l3 1.200l-3 1.400z" fill="#7f9fd0"/><path d="M2.200 8l2.800 1l3-1.200" stroke="#3f6fb5" stroke-width=".8" fill="none"/></svg>
<svg class="a" style="left:12.80px;top:80.50px" width="10.4" height="10.4" viewBox="0 0 10 10"><path d="M2 2.5l3-1l3 1l-3 1.2z" fill="#1f4788"/><path d="M2 5.5l3-1.2l3 1.2l-3 1.4z" fill="#e9c23a"/><path d="M4 7.5l4 1.5" stroke="#1f4788" stroke-width="1"/></svg>
<svg class="a" style="left:12.80px;top:91.80px" width="10.4" height="10.4" viewBox="0 0 10 10"><path d="M2 3l3-1.2l3 1.2l-3 1.4z" fill="#e9c23a"/><path d="M2 6l3-1.2l3 1.2l-3 1.4z" fill="#3f6fb5"/><path d="M6 2l2.5-1" stroke="#1f4788" stroke-width=".8"/></svg>
<svg class="a" style="left:12.80px;top:103.50px" width="10.4" height="10.4" viewBox="0 0 10 10"><path d="M2 3.600l3-1.300l3 1.300l-3 1.300z" fill="#3f6fb5"/><circle cx="5.200" cy="2.600" r="1.300" fill="#4fae5c"/><path d="M2 7l3-1.300l3 1.300l-3 1.300z" fill="#3f6fb5"/><circle cx="5.600" cy="6.200" r="1.400" fill="#4fae5c"/><path d="M2.200 8.400l2.800 1l3-1.200" stroke="#9fc0e6" stroke-width=".7" fill="none"/></svg>
<svg class="a" style="left:12.80px;top:114.80px" width="10.4" height="10.4" viewBox="0 0 10 10"><path d="M4 1.5v7M2 3h5M2.5 5.5h5v3h-5z" stroke="#3f6fb5" stroke-width=".8" fill="#dbe8f7"/></svg>
<svg class="a" style="left:12.80px;top:128.50px" width="10.4" height="10.4" viewBox="0 0 10 10"><circle cx="5" cy="5" r="3" fill="#b9c4d8"/><path d="M3 3l4 4" stroke="#8a98b4" stroke-width="1"/><circle cx="5" cy="5" r="1.2" fill="#dfe6f0"/></svg>
<svg class="a" style="left:12.80px;top:139.80px" width="10.4" height="10.4" viewBox="0 0 10 10"><path d="M2 8l6-6" stroke="#d44" stroke-width="1"/><path d="M2 5l3 3" stroke="#3f6fb5" stroke-width="1"/><path d="M5 8.5l3-1" stroke="#d44" stroke-width=".8"/></svg>
<svg class="a" style="left:12.80px;top:152.30px" width="10.4" height="10.4" viewBox="0 0 10 10"><path d="M4 1.5v7M2 3h5M2.5 5.5h5v3h-5z" stroke="#3f6fb5" stroke-width=".8" fill="#dbe8f7"/></svg>
<svg class="a" style="left:12.80px;top:163.50px" width="10.4" height="10.4" viewBox="0 0 10 10"><path d="M3 2h3v2h2v2h-5z" fill="#3f6fb5"/><path d="M2 6.5l3-1l3 1l-3 1.4z" fill="#e9c23a"/></svg>
<svg class="a" style="left:12.80px;top:184.30px" width="10.4" height="10.4" viewBox="0 0 10 10"><rect x="1.5" y="1.5" width="5" height="5" fill="#dbe8f7" stroke="#3f6fb5" stroke-width=".7"/><rect x="3.5" y="3.5" width="5" height="5" fill="#c4d6ee" stroke="#3f6fb5" stroke-width=".7"/></svg>
<svg class="a" style="left:12.80px;top:195.80px" width="10.4" height="10.4" viewBox="0 0 10 10"><rect x="1.5" y="1.5" width="7" height="7" fill="#a9c4e8" stroke="#3f6fb5" stroke-width=".9"/><rect x="3" y="3" width="4" height="4" fill="#dfeaf7"/></svg>
<svg class="a" style="left:12.80px;top:207.30px" width="10.4" height="10.4" viewBox="0 0 10 10"><path d="M1.5 8.5v-4h3.5v-3h3.5v7z" fill="#a9c4e8" stroke="#3f6fb5" stroke-width=".8"/></svg>
<svg class="a" style="left:12.80px;top:218.80px" width="10.4" height="10.4" viewBox="0 0 10 10"><rect x="1.5" y="1.5" width="4" height="3" fill="#e9c23a" stroke="#886" stroke-width=".4"/><rect x="4" y="4.5" width="4.5" height="4" fill="#9fc0e6" stroke="#3f6fb5" stroke-width=".6"/><path d="M3.5 4.5v2h1" stroke="#1f4788" stroke-width=".6" fill="none"/></svg>
<svg class="a" style="left:12.80px;top:230.30px" width="10.4" height="10.4" viewBox="0 0 10 10"><rect x="1.5" y="2" width="5" height="6" fill="#9fc0e6" stroke="#3f6fb5" stroke-width=".6"/><path d="M4 8.5l4.5-6" stroke="#667" stroke-width=".9"/><path d="M6 2.5l2.5 2" stroke="#e9c23a" stroke-width="1"/></svg>
<svg class="a" style="left:12.80px;top:254.80px" width="10.4" height="10.4" viewBox="0 0 10 10"><path d="M5 1v5M3 2.5h4" stroke="#3f6fb5" stroke-width=".8"/><ellipse cx="5" cy="7" rx="3" ry="1.6" fill="#3f6fb5"/></svg>
<svg class="a" style="left:12.80px;top:265.80px" width="10.4" height="10.4" viewBox="0 0 10 10"><circle cx="5" cy="5" r="3.2" fill="#dfe6f0" stroke="#667" stroke-width=".6"/><path d="M2 6q3-4 6-2" stroke="#1f4788" stroke-width=".9" fill="none"/></svg>
<svg class="a" style="left:12.80px;top:277.30px" width="10.4" height="10.4" viewBox="0 0 10 10"><circle cx="5.5" cy="4.5" r="2.8" fill="#4f9a5a"/><circle cx="5.5" cy="4.5" r="1.2" fill="#3f6fb5"/><path d="M1.5 8.5l2.5-2" stroke="#c9a227" stroke-width="1.2"/></svg>
<div class="a" style="left:13.5px;top:126.3px;width:9px;height:0.7px;background:#bcbcbc"></div>
<div class="a" style="left:13.5px;top:179px;width:9px;height:0.8px;background:#cdcdcd"></div>
<div class="a" style="left:13.5px;top:179.8px;width:9px;height:0.6px;background:#fff"></div>
<div class="a" style="left:13.5px;top:181px;width:9px;height:0.8px;background:#cdcdcd"></div>
<div class="a" style="left:13.5px;top:181.8px;width:9px;height:0.6px;background:#fff"></div>
<div class="a" style="left:13.5px;top:246.3px;width:9px;height:0.7px;background:#bcbcbc"></div>
<div class="a" style="left:13.5px;top:248.5px;width:9px;height:0.8px;background:#cdcdcd"></div>
<div class="a" style="left:13.5px;top:249.3px;width:9px;height:0.6px;background:#fff"></div>
<div class="a" style="left:13.5px;top:250.5px;width:9px;height:0.8px;background:#cdcdcd"></div>
<div class="a" style="left:13.5px;top:251.3px;width:9px;height:0.6px;background:#fff"></div>
<svg class="a" style="left:25.30px;top:57.30px" width="10.4" height="10.4" viewBox="0 0 10 10"><rect x="1.5" y="1.5" width="7" height="7" fill="#fff" stroke="#3f6fb5" stroke-width=".8"/><path d="M3 6l2-2l2 2v2h-4z" fill="#1f4788"/></svg>
<svg class="a" style="left:25.30px;top:71.50px" width="10.4" height="10.4" viewBox="0 0 10 10"><path d="M1.5 3.5l2-2h5v5l-2 2h-5z" fill="#bcd3ee" stroke="#1f4788" stroke-width=".6"/><path d="M1.5 3.5h5v5h-5z" fill="#dfeaf7" stroke="#1f4788" stroke-width=".6"/><path d="M6.5 3.5l2-2v5l-2 2z" fill="#5f88c4" stroke="#1f4788" stroke-width=".5"/></svg>
<svg class="a" style="left:25.30px;top:82.80px" width="10.4" height="10.4" viewBox="0 0 10 10"><path d="M1.5 3.5l2-2h5v5l-2 2h-5z" fill="#e8f0fa" stroke="#3f6fb5" stroke-width=".6"/><path d="M1.5 3.5h5v5h-5z" fill="#f6f9fd" stroke="#3f6fb5" stroke-width=".6"/><path d="M6.5 3.5l2-2v5l-2 2z" fill="#c4d6ee" stroke="#3f6fb5" stroke-width=".5"/></svg>
<svg class="a" style="left:25.30px;top:94.30px" width="10.4" height="10.4" viewBox="0 0 10 10"><path d="M1.5 3.5l2-2h5v5l-2 2h-5z" fill="#bcd3ee" stroke="#1f4788" stroke-width=".6"/><path d="M1.5 3.5h5v5h-5z" fill="#dfeaf7" stroke="#1f4788" stroke-width=".6"/><path d="M6.5 3.5l2-2v5l-2 2z" fill="#5f88c4" stroke="#1f4788" stroke-width=".5"/></svg>
<svg class="a" style="left:25.30px;top:105.50px" width="10.4" height="10.4" viewBox="0 0 10 10"><path d="M1.5 3.5l2-2h5v5l-2 2h-5z" fill="#e8f0fa" stroke="#3f6fb5" stroke-width=".6"/><path d="M1.5 3.5h5v5h-5z" fill="#f6f9fd" stroke="#3f6fb5" stroke-width=".6"/><path d="M6.5 3.5l2-2v5l-2 2z" fill="#c4d6ee" stroke="#3f6fb5" stroke-width=".5"/></svg>
<svg class="a" style="left:25.30px;top:117.30px" width="10.4" height="10.4" viewBox="0 0 10 10"><path d="M1.5 3.5l2-2h5v5l-2 2h-5z" fill="#8fb0dc" stroke="#1f4788" stroke-width=".6"/><path d="M1.5 3.5h5v5h-5z" fill="#3f6fb5" stroke="#1f4788" stroke-width=".6"/><path d="M6.5 3.5l2-2v5l-2 2z" fill="#2a5090" stroke="#1f4788" stroke-width=".5"/></svg>
<svg class="a" style="left:25.30px;top:128.50px" width="10.4" height="10.4" viewBox="0 0 10 10"><rect x="1.5" y="1.5" width="5" height="4.5" fill="#dbe8f7" stroke="#3f6fb5" stroke-width=".6"/><rect x="3.5" y="3.5" width="5" height="4.5" fill="#3f6fb5"/></svg>
<svg class="a" style="left:25.30px;top:140.80px" width="10.4" height="10.4" viewBox="0 0 10 10"><path d="M5 1l3.2 2v4l-3.2 2l-3.2-2v-4z" fill="#bcd3ee"/><path d="M5 5l3.2-2v4l-3.2 2z" fill="#7fa0d4"/><path d="M5 5l-3.2-2" stroke="#fff" stroke-width=".4"/></svg>
<svg class="a" style="left:25.30px;top:144.80px" width="10.4" height="10.4" viewBox="0 0 10 10"><path d="M5 1l3.2 2v4l-3.2 2l-3.2-2v-4z" fill="#8fb0e0"/><path d="M5 5l3.2-2v4l-3.2 2z" fill="#3f6fb5"/><path d="M5 5l-3.2-2" stroke="#fff" stroke-width=".4"/></svg>
<svg class="a" style="left:25.30px;top:155.30px" width="10.4" height="10.4" viewBox="0 0 10 10"><path d="M5 1l3.2 2v4l-3.2 2l-3.2-2v-4z" fill="#bcd3ee"/><path d="M5 5l3.2-2v4l-3.2 2z" fill="#7fa0d4"/><path d="M5 5l-3.2-2" stroke="#fff" stroke-width=".4"/></svg>
<svg class="a" style="left:25.30px;top:166.50px" width="10.4" height="10.4" viewBox="0 0 10 10"><path d="M5 1l3.2 2v4l-3.2 2l-3.2-2v-4z" fill="#6f94d0"/><path d="M5 5l3.2-2v4l-3.2 2z" fill="#2a5090"/><path d="M5 5l-3.2-2" stroke="#fff" stroke-width=".4"/></svg>
<svg class="a" style="left:25.30px;top:177.80px" width="10.4" height="10.4" viewBox="0 0 10 10"><path d="M5 1l3.2 2v4l-3.2 2l-3.2-2v-4z" fill="#8fb0e0"/><path d="M5 5l3.2-2v4l-3.2 2z" fill="#3f6fb5"/><path d="M5 5l-3.2-2" stroke="#fff" stroke-width=".4"/></svg>
<svg class="a" style="left:25.30px;top:192.80px" width="10.4" height="10.4" viewBox="0 0 10 10"><rect x="1.5" y="2.5" width="7" height="5.5" fill="#334a6c"/><circle cx="5" cy="5.2" r="1.8" fill="#9fbce6"/><rect x="2" y="1.8" width="2" height="1" fill="#556"/></svg>
<svg class="a" style="left:25.30px;top:207.30px" width="10.4" height="10.4" viewBox="0 0 10 10"><circle cx="5" cy="5" r="3.4" fill="#e4eefa" stroke="#9fb7d8" stroke-width=".6"/><path d="M5 2v6M2 5h6" stroke="#7f9fd0" stroke-width=".6"/><circle cx="5" cy="5" r="1" fill="#3f6fb5"/></svg>
<svg class="a" style="left:25.30px;top:227.80px" width="10.4" height="10.4" viewBox="0 0 10 10"><rect x="1.2" y="1.2" width="7.6" height="7.6" fill="#fff" stroke="#223" stroke-width=".8"/><path d="M3 7.5l2-5l2 5M3.8 5.8h2.4" stroke="#223" stroke-width=".7" fill="none"/></svg>
<svg class="a" style="left:25.30px;top:242.30px" width="10.4" height="10.4" viewBox="0 0 10 10"><path d="M1.5 3.5l2-2h5v5l-2 2h-5z" fill="#fff" stroke="#223" stroke-width=".6"/><path d="M1.5 3.5h5v5h-5z" fill="#fff" stroke="#223" stroke-width=".6"/><path d="M6.5 3.5l2-2v5l-2 2z" fill="#fff" stroke="#223" stroke-width=".5"/></svg>
<svg class="a" style="left:25.30px;top:254.30px" width="10.4" height="10.4" viewBox="0 0 10 10"><path d="M5 1l3.5 2v4l-3.5 2l-3.5-2v-4z" fill="#fff" stroke="#223" stroke-width=".7"/><path d="M5 9v-4l3.5-2M5 5l-3.5-2" stroke="#223" stroke-width=".6" fill="none"/></svg>
<svg class="a" style="left:25.30px;top:265.50px" width="10.4" height="10.4" viewBox="0 0 10 10"><circle cx="5" cy="5" r="3.6" fill="#3f78c0"/><path d="M2 4q3-2 6 0M2 6.5q3 1.5 6 0" stroke="#9fc0e6" stroke-width=".6" fill="none"/><circle cx="4" cy="3.8" r="1.2" fill="#a9c8ee"/></svg>
<svg class="a" style="left:25.30px;top:277.30px" width="10.4" height="10.4" viewBox="0 0 10 10"><circle cx="5" cy="5" r="3.700" fill="#f4a42c"/><path d="M1.400 4.400q.6-3.100 3.600-3.100t3.600 3.100q-3.600 1.800-7.200 0z" fill="#6a4cb8"/><circle cx="4" cy="3" r="1" fill="#a898e0"/><circle cx="4.200" cy="6.400" r="1.100" fill="#fcd470"/></svg>
<svg class="a" style="left:25.30px;top:291.80px" width="10.4" height="10.4" viewBox="0 0 10 10"><circle cx="4.5" cy="5" r="3.2" fill="#5f94d4"/><rect x="5.5" y="4" width="3" height="4.5" fill="#e4eefa" stroke="#3f6fb5" stroke-width=".5"/></svg>
<div class="a" style="left:26px;top:69.6px;width:9px;height:0.7px;background:#bcbcbc"></div>
<div class="a" style="left:26px;top:190.3px;width:9px;height:0.7px;background:#bcbcbc"></div>
<div class="a" style="left:26px;top:205.5px;width:9px;height:0.7px;background:#bcbcbc"></div>
<div class="a" style="left:26px;top:220px;width:9px;height:0.7px;background:#bcbcbc"></div>
<div class="a" style="left:26px;top:223.5px;width:9px;height:0.8px;background:#cdcdcd"></div>
<div class="a" style="left:26px;top:224.3px;width:9px;height:0.6px;background:#fff"></div>
<div class="a" style="left:26px;top:225.5px;width:9px;height:0.8px;background:#cdcdcd"></div>
<div class="a" style="left:26px;top:226.3px;width:9px;height:0.6px;background:#fff"></div>
<div class="a" style="left:26px;top:290px;width:9px;height:0.7px;background:#bcbcbc"></div>
<div class="a" style="left:624.5px;top:52px;width:25.5px;height:278px;background:#f0f0f0"></div>
<div class="a" style="left:624.6px;top:52px;width:0.8px;height:264px;background:#fafafa"></div>
<div class="a" style="left:626px;top:52px;width:12px;height:259px;background:#f4f4f4;border-right:0.8px solid #cacaca;border-bottom:0.8px solid #cacaca;box-sizing:border-box"></div>
<div class="a" style="left:638.8px;top:52px;width:11.2px;height:274px;background:#f4f4f4;border-bottom:0.8px solid #cacaca;box-sizing:border-box"></div>
<div class="a" style="left:627px;top:53.3px;width:9px;height:0.8px;background:#cdcdcd"></div>
<div class="a" style="left:627px;top:54.099999999999994px;width:9px;height:0.6px;background:#fff"></div>
<div class="a" style="left:627px;top:55.3px;width:9px;height:0.8px;background:#cdcdcd"></div>
<div class="a" style="left:627px;top:56.099999999999994px;width:9px;height:0.6px;background:#fff"></div>
<div class="a" style="left:640px;top:53.3px;width:9px;height:0.8px;background:#cdcdcd"></div>
<div class="a" style="left:640px;top:54.099999999999994px;width:9px;height:0.6px;background:#fff"></div>
<div class="a" style="left:640px;top:55.3px;width:9px;height:0.8px;background:#cdcdcd"></div>
<div class="a" style="left:640px;top:56.099999999999994px;width:9px;height:0.6px;background:#fff"></div>
<svg class="a" style="left:626.40px;top:57.20px" width="10.4" height="10.4" viewBox="0 0 10 10"><path d="M3 2l3-1v5l-3 1z" fill="#9fbce6"/><path d="M6 1l1.5 1.5v5l-1.5-1.5z" fill="#6f94d0"/><path d="M3 7l1.5 1.5l3-1" fill="none" stroke="#9fbce6" stroke-width=".8"/></svg>
<svg class="a" style="left:626.40px;top:69.10px" width="10.4" height="10.4" viewBox="0 0 10 10"><path d="M1.5 3.5l2-2h5v5l-2 2h-5z" fill="#bcd3ee" stroke="#1f4788" stroke-width=".6"/><path d="M1.5 3.5h5v5h-5z" fill="#dfeaf7" stroke="#1f4788" stroke-width=".6"/><path d="M6.5 3.5l2-2v5l-2 2z" fill="#5f88c4" stroke="#1f4788" stroke-width=".5"/></svg>
<svg class="a" style="left:626.40px;top:80.30px" width="10.4" height="10.4" viewBox="0 0 10 10"><path d="M1.5 8l1-5.5l6 3.5l-1.5 2.5z" fill="#bcd0ec" stroke="#3f6fb5" stroke-width=".5"/><path d="M2.5 2.5l6 3.5l-1.5 2.5z" fill="#7fa0d4"/></svg>
<svg class="a" style="left:626.40px;top:92.20px" width="10.4" height="10.4" viewBox="0 0 10 10"><path d="M5 1l3 6.5q-3 2-6 0z" fill="#8fb0e0"/><path d="M5 1l1.2 7.4q1-.2 1.8-.9z" fill="#4f7cc0"/></svg>
<svg class="a" style="left:626.40px;top:103.40px" width="10.4" height="10.4" viewBox="0 0 10 10"><circle cx="5" cy="5" r="3.6" fill="#7fa5dc"/><circle cx="4" cy="3.8" r="1.6" fill="#c4d8f2"/></svg>
<svg class="a" style="left:626.40px;top:114.60px" width="10.4" height="10.4" viewBox="0 0 10 10"><path d="M2 2.5v5.5q3 1.6 6 0v-5.5z" fill="#a9c4e8" stroke="#1f4788" stroke-width=".6"/><ellipse cx="5" cy="2.5" rx="3" ry="1.2" fill="#e4eefa" stroke="#1f4788" stroke-width=".6"/></svg>
<svg class="a" style="left:626.40px;top:125.80px" width="10.4" height="10.4" viewBox="0 0 10 10"><ellipse cx="5" cy="5" rx="3.8" ry="3" fill="#5f88c8"/><ellipse cx="5" cy="4.6" rx="1.5" ry="1" fill="#e8eef6"/></svg>
<svg class="a" style="left:626.40px;top:137.00px" width="10.4" height="10.4" viewBox="0 0 10 10"><path d="M5 1l3.5 6.5l-3 1.5l-4-1.5z" fill="#9fbce6"/><path d="M5 1l3.5 6.5l-3 1.5z" fill="#4f7cc0"/></svg>
<svg class="a" style="left:626.40px;top:148.80px" width="10.4" height="10.4" viewBox="0 0 10 10"><path d="M2 7.5q3-2 6-3M3 5.5q2-2 5-3" stroke="#5f88c8" stroke-width="1" fill="none" stroke-dasharray="1.6 .8"/></svg>
<svg class="a" style="left:626.40px;top:160.10px" width="10.4" height="10.4" viewBox="0 0 10 10"><path d="M1.5 7l3.5-4.5h4l-3.5 4.5z" fill="#a9c4e8"/></svg>
<svg class="a" style="left:626.40px;top:174.80px" width="10.4" height="10.4" viewBox="0 0 10 10"><path d="M1.5 4l1.5-1.5h3v5l-1.5 1.5h-3z" fill="#fff" stroke="#223" stroke-width=".7"/><path d="M1.5 4h3v5M4.5 4l1.5-1.5" stroke="#223" stroke-width=".6" fill="none"/><path d="M8 9v-7.5M8 1.5l-1 1.5M8 1.5l1 1.5" stroke="#1f4788" stroke-width=".8" fill="none"/></svg>
<svg class="a" style="left:626.40px;top:186.80px" width="10.4" height="10.4" viewBox="0 0 10 10"><path d="M2 5.5l3-1.5l3 1.5l-3 2z" fill="#8fb0dc" stroke="#3f6fb5" stroke-width=".5"/><path d="M2 5.5v1.5l3 2l3-2v-1.5" fill="#5f88c4"/><path d="M5 1v3.5M5 1l-1 1.2M5 1l1 1.2" stroke="#3f6fb5" stroke-width=".8" fill="none"/></svg>
<svg class="a" style="left:626.40px;top:197.20px" width="10.4" height="10.4" viewBox="0 0 10 10"><path d="M1.5 3q5-1 6.5 5.5" fill="none" stroke="#a9c4e8" stroke-width="2"/></svg>
<svg class="a" style="left:626.40px;top:209.10px" width="10.4" height="10.4" viewBox="0 0 10 10"><path d="M2 2q3-1.5 6 0" fill="none" stroke="#3f6fb5" stroke-width=".9"/><rect x="2" y="4" width="6" height="4" rx="1" fill="#5f88c8"/><rect x="3" y="5" width="4" height="1.6" fill="#e4eefa"/></svg>
<svg class="a" style="left:626.40px;top:220.30px" width="10.4" height="10.4" viewBox="0 0 10 10"><path d="M3.5 1.5h3l.5 5l1 2h-6l1-2z" fill="#bcd0ec"/><ellipse cx="5" cy="8" rx="3" ry="1" fill="#9fbce6"/></svg>
<svg class="a" style="left:626.40px;top:236.00px" width="10.4" height="10.4" viewBox="0 0 10 10"><ellipse cx="3.6" cy="5" rx="2.8" ry="2.4" fill="#6f9fc8" stroke="#3f6f9f" stroke-width=".7"/><ellipse cx="6.4" cy="5" rx="2.8" ry="2.4" fill="#6f9fc8" stroke="#3f6f9f" stroke-width=".7"/><ellipse cx="5" cy="5" rx="1.3" ry="2" fill="#6f9fc8"/></svg>
<svg class="a" style="left:626.40px;top:247.30px" width="10.4" height="10.4" viewBox="0 0 10 10"><ellipse cx="3.6" cy="5" rx="2.8" ry="2.4" fill="#6f9fc8" stroke="#3f6f9f" stroke-width=".7"/><ellipse cx="6.4" cy="5" rx="2.8" ry="2.4" fill="#eef3f8" stroke="#3f6f9f" stroke-width=".7"/><ellipse cx="5" cy="5" rx="1.3" ry="2" fill="#eef3f8"/></svg>
<svg class="a" style="left:626.40px;top:258.10px" width="10.4" height="10.4" viewBox="0 0 10 10"><ellipse cx="3.6" cy="5" rx="2.8" ry="2.4" fill="#eef3f8" stroke="#3f6f9f" stroke-width=".7"/><ellipse cx="6.4" cy="5" rx="2.8" ry="2.4" fill="#eef3f8" stroke="#3f6f9f" stroke-width=".7"/><ellipse cx="5" cy="5" rx="1.3" ry="2" fill="#6f9fc8"/></svg>
<svg class="a" style="left:626.40px;top:272.80px" width="10.4" height="10.4" viewBox="0 0 10 10"><circle cx="5" cy="6" r="1.2" fill="#889"/><path d="M5 6v-4.5" stroke="#22c" stroke-width=".9"/><path d="M5 6l-3 2" stroke="#2a2" stroke-width=".9"/><path d="M5 6l3 2" stroke="#d22" stroke-width=".9"/><circle cx="5" cy="5.5" r="3.6" fill="none" stroke="#223" stroke-width=".5"/></svg>
<svg class="a" style="left:626.40px;top:284.80px" width="10.4" height="10.4" viewBox="0 0 10 10"><circle cx="5" cy="5" r="3.6" fill="#cfe0f4" stroke="#2a8" stroke-width=".8"/><ellipse cx="5" cy="5" rx="3.6" ry="1.5" fill="none" stroke="#d22" stroke-width=".7"/><ellipse cx="5" cy="5" rx="1.5" ry="3.6" fill="none" stroke="#22c" stroke-width=".7"/></svg>
<svg class="a" style="left:626.40px;top:296.60px" width="10.4" height="10.4" viewBox="0 0 10 10"><rect x="2" y="1.5" width="2.6" height="7" fill="#b4bcc8"/><rect x="5.5" y="3" width="2" height="2" fill="#889"/><rect x="5.5" y="6" width="2" height="2" fill="#889"/></svg>
<div class="a" style="left:627px;top:172.3px;width:9.5px;height:0.7px;background:#bcbcbc"></div>
<div class="a" style="left:627px;top:233.2px;width:9.5px;height:0.7px;background:#bcbcbc"></div>
<div class="a" style="left:627px;top:270.3px;width:9.5px;height:0.7px;background:#bcbcbc"></div>
<div class="a" style="left:627px;top:309.5px;width:9.5px;height:0.7px;background:#bcbcbc"></div>
<svg class="a" style="left:639.00px;top:57.20px" width="10.4" height="10.4" viewBox="0 0 10 10"><rect x="1.5" y="1.5" width="5" height="4.5" fill="#dbe8f7" stroke="#3f6fb5" stroke-width=".6"/><rect x="3.5" y="3.5" width="5" height="4.5" fill="#3f6fb5"/></svg>
<svg class="a" style="left:639.00px;top:68.40px" width="10.4" height="10.4" viewBox="0 0 10 10"><rect x="1.5" y="1.5" width="5" height="4.5" fill="#3f6fb5"/><rect x="4.5" y="4.5" width="4" height="4" fill="#dbe8f7" stroke="#3f6fb5" stroke-width=".6"/></svg>
<svg class="a" style="left:639.00px;top:80.30px" width="10.4" height="10.4" viewBox="0 0 10 10"><rect x="1.5" y="2" width="7" height="6" fill="#3f6fb5"/><path d="M1.5 4h7M1.5 6h7" stroke="#dbe8f7" stroke-width=".6"/></svg>
<svg class="a" style="left:639.00px;top:92.80px" width="10.4" height="10.4" viewBox="0 0 10 10"><path d="M2 2h5.5v6.5h-5.5z" fill="#dbe8f7" stroke="#3f6fb5" stroke-width=".7"/><path d="M3.5 1h5v6" fill="none" stroke="#3f6fb5" stroke-width=".7"/></svg>
<svg class="a" style="left:639.00px;top:113.20px" width="10.4" height="10.4" viewBox="0 0 10 10"><ellipse cx="3.6" cy="5" rx="2.8" ry="2.4" fill="#3f8aa8" stroke="#3f6f9f" stroke-width=".7"/><ellipse cx="6.4" cy="5" rx="2.8" ry="2.4" fill="#3f8aa8" stroke="#3f6f9f" stroke-width=".7"/><ellipse cx="5" cy="5" rx="1.3" ry="2" fill="#3f8aa8"/></svg>
<svg class="a" style="left:639.00px;top:124.40px" width="10.4" height="10.4" viewBox="0 0 10 10"><ellipse cx="3.6" cy="5" rx="2.8" ry="2.4" fill="#3f8aa8" stroke="#3f6f9f" stroke-width=".7"/><ellipse cx="6.4" cy="5" rx="2.8" ry="2.4" fill="#eef3f8" stroke="#3f6f9f" stroke-width=".7"/><ellipse cx="5" cy="5" rx="1.3" ry="2" fill="#eef3f8"/></svg>
<svg class="a" style="left:639.00px;top:135.60px" width="10.4" height="10.4" viewBox="0 0 10 10"><ellipse cx="3.6" cy="5" rx="2.8" ry="2.4" fill="#eef3f8" stroke="#3f6f9f" stroke-width=".7"/><ellipse cx="6.4" cy="5" rx="2.8" ry="2.4" fill="#eef3f8" stroke="#3f6f9f" stroke-width=".7"/><ellipse cx="5" cy="5" rx="1.3" ry="2" fill="#3f8aa8"/></svg>
<svg class="a" style="left:639.00px;top:150.30px" width="10.4" height="10.4" viewBox="0 0 10 10"><path d="M1.5 3.5l2-2h5v5l-2 2h-5z" fill="#e8f0fa" stroke="#3f6fb5" stroke-width=".6"/><path d="M1.5 3.5h5v5h-5z" fill="#f6f9fd" stroke="#3f6fb5" stroke-width=".6"/><path d="M6.5 3.5l2-2v5l-2 2z" fill="#c4d6ee" stroke="#3f6fb5" stroke-width=".5"/></svg>
<svg class="a" style="left:639.00px;top:161.50px" width="10.4" height="10.4" viewBox="0 0 10 10"><rect x="2" y="5" width="3.2" height="3.2" fill="#dbe8f7" stroke="#223" stroke-width=".6"/><path d="M5 5l3.5-3.5" stroke="#3f6fb5" stroke-width="1"/><circle cx="8" cy="2" r="1" fill="#3f6fb5"/></svg>
<svg class="a" style="left:639.00px;top:172.80px" width="10.4" height="10.4" viewBox="0 0 10 10"><path d="M1.5 3.5l2-2h5v5l-2 2h-5z" fill="#bcd3ee" stroke="#1f4788" stroke-width=".6"/><path d="M1.5 3.5h5v5h-5z" fill="#dfeaf7" stroke="#1f4788" stroke-width=".6"/><path d="M6.5 3.5l2-2v5l-2 2z" fill="#5f88c4" stroke="#1f4788" stroke-width=".5"/></svg>
<svg class="a" style="left:639.00px;top:183.80px" width="10.4" height="10.4" viewBox="0 0 10 10"><path d="M1.5 3.5l2-2h5v5l-2 2h-5z" fill="#dfe6ee" stroke="#334" stroke-width=".6"/><path d="M1.5 3.5h5v5h-5z" fill="#eef2f6" stroke="#334" stroke-width=".6"/><path d="M6.5 3.5l2-2v5l-2 2z" fill="#9aa8bc" stroke="#334" stroke-width=".5"/><path d="M2.5 4.5l3 3M5.5 4.5l-3 3" stroke="#d22" stroke-width="1"/></svg>
<svg class="a" style="left:639.00px;top:195.80px" width="10.4" height="10.4" viewBox="0 0 10 10"><path d="M1.5 3.5l2-2h5v5l-2 2h-5z" fill="#dfe6ee" stroke="#334" stroke-width=".6"/><path d="M1.5 3.5h5v5h-5z" fill="#f6f9fd" stroke="#334" stroke-width=".6"/><path d="M6.5 3.5l2-2v5l-2 2z" fill="#9aa8bc" stroke="#334" stroke-width=".5"/><path d="M1.5 3q3.5-3 7 0" stroke="#1f4788" stroke-width=".9" fill="none"/></svg>
<svg class="a" style="left:639.00px;top:207.00px" width="10.4" height="10.4" viewBox="0 0 10 10"><path d="M1.5 3.5l2-2h5v5l-2 2h-5z" fill="#9fc0e6" stroke="#1f4788" stroke-width=".6"/><path d="M1.5 3.5h5v5h-5z" fill="#5f88c4" stroke="#1f4788" stroke-width=".6"/><path d="M6.5 3.5l2-2v5l-2 2z" fill="#2a5090" stroke="#1f4788" stroke-width=".5"/><path d="M1 2.5q1-1.5 2.5-1.5" stroke="#223" stroke-width=".7" fill="none"/></svg>
<svg class="a" style="left:639.00px;top:218.20px" width="10.4" height="10.4" viewBox="0 0 10 10"><rect x="1.5" y="2" width="4" height="4" fill="#dbe8f7" stroke="#3f6fb5" stroke-width=".6"/><rect x="4.5" y="4" width="4" height="4" fill="#3f6fb5"/><path d="M6 1.5q2 0 2.5 2" stroke="#1f4788" stroke-width=".7" fill="none"/></svg>
<svg class="a" style="left:639.00px;top:229.40px" width="10.4" height="10.4" viewBox="0 0 10 10"><rect x="3.5" y="2" width="5" height="6" fill="#4fae6a" stroke="#234" stroke-width=".5"/><path d="M2 1.5v7.5" stroke="#223" stroke-width=".8"/><circle cx="2" cy="3" r=".9" fill="#3f6fb5"/><circle cx="2" cy="7" r=".9" fill="#d22"/></svg>
<svg class="a" style="left:639.00px;top:245.50px" width="10.4" height="10.4" viewBox="0 0 10 10"><path d="M1.5 3.5l2-2h5v5l-2 2h-5z" fill="#9fc0e6" stroke="#1f4788" stroke-width=".6"/><path d="M1.5 3.5h5v5h-5z" fill="#5f88c4" stroke="#1f4788" stroke-width=".6"/><path d="M6.5 3.5l2-2v5l-2 2z" fill="#2a5090" stroke="#1f4788" stroke-width=".5"/><path d="M1 2.5q1-1.5 2.5-1.5" stroke="#223" stroke-width=".7" fill="none"/></svg>
<svg class="a" style="left:639.00px;top:256.00px" width="10.4" height="10.4" viewBox="0 0 10 10"><rect x="3.5" y="2" width="4" height="6" fill="#dfe6ee" stroke="#234" stroke-width=".5"/><rect x="7" y="2" width="1.6" height="6" fill="#d22"/><path d="M2 1.5v7.5" stroke="#223" stroke-width=".8"/><circle cx="2" cy="3" r=".9" fill="#3f6fb5"/><circle cx="2" cy="7" r=".9" fill="#2a2"/></svg>
<svg class="a" style="left:639.00px;top:270.80px" width="10.4" height="10.4" viewBox="0 0 10 10"><path d="M2 2l2-1v6l-2 1z" fill="#9fbce6"/><path d="M6 1.5q-2 2 0 3.5q2 1.5 0 3.5" stroke="#d22" stroke-width=".9" fill="none"/><path d="M8 3v4M8 7l-1-1M8 7l1-1" stroke="#1f4788" stroke-width=".7" fill="none"/></svg>
<svg class="a" style="left:639.00px;top:282.60px" width="10.4" height="10.4" viewBox="0 0 10 10"><path d="M5 1.5l2.5 6.5h-5z" fill="#e8b830" stroke="#a07818" stroke-width=".4"/><rect x="1.5" y="5.5" width="3" height="3" fill="#9fc0e6" stroke="#3f6fb5" stroke-width=".5"/></svg>
<svg class="a" style="left:639.00px;top:293.80px" width="10.4" height="10.4" viewBox="0 0 10 10"><rect x="1.5" y="2.5" width="3" height="5.5" rx="1" fill="#3f6fb5"/><rect x="5.5" y="2.5" width="3" height="5.5" rx="1" fill="#3f6fb5"/><path d="M5 1.5v7.5" stroke="#223" stroke-width=".6"/></svg>
<svg class="a" style="left:639.00px;top:305.00px" width="10.4" height="10.4" viewBox="0 0 10 10"><rect x="1.5" y="1.5" width="7" height="7" fill="#3f6fb5"/><rect x="3" y="3" width="4" height="4" fill="#9fc0e6"/></svg>
<svg class="a" style="left:639.00px;top:315.30px" width="10.4" height="10.4" viewBox="0 0 10 10"><path d="M3 2.5l5-1v5.5l-5 1z" fill="#8fb0dc" stroke="#3f6fb5" stroke-width=".5"/><path d="M1 7l1.5 1.5l2.5-2.5" stroke="#2a8a3a" stroke-width="1.1" fill="none"/></svg>
<div class="a" style="left:640px;top:107px;width:9px;height:0.8px;background:#cdcdcd"></div>
<div class="a" style="left:640px;top:107.8px;width:9px;height:0.6px;background:#fff"></div>
<div class="a" style="left:640px;top:109px;width:9px;height:0.8px;background:#cdcdcd"></div>
<div class="a" style="left:640px;top:109.8px;width:9px;height:0.6px;background:#fff"></div>
<div class="a" style="left:640px;top:147.8px;width:9.5px;height:0.7px;background:#bcbcbc"></div>
<div class="a" style="left:640px;top:242px;width:9.5px;height:0.7px;background:#bcbcbc"></div>
<div class="a" style="left:640px;top:268.2px;width:9.5px;height:0.7px;background:#bcbcbc"></div>
<svg class="a" style="left:37.8px;top:52px" width="586.8" height="263.4" viewBox="37.8 52 586.8 263.4" font-family="Liberation Sans,sans-serif"><rect x="37.8" y="52" width="586.8" height="263.4" fill="#000"/><defs><clipPath id="fl"><path d="M256 91H398V135.3H427V297.8H329.2V301.3H256Z"/></clipPath><pattern id="wd" width="200" height="2.7" patternUnits="userSpaceOnUse"><rect width="200" height="2.7" fill="#c79b8c"/><rect y="1.5" width="200" height="1.1" fill="#dcb7a8"/></pattern><pattern id="wd2" width="200" height="4.25" patternUnits="userSpaceOnUse" patternTransform="translate(0 243.2)"><rect width="200" height="4.25" fill="#c79b8c"/><rect y="2.4" width="200" height="1.2" fill="#e0bdae"/></pattern><linearGradient id="cab" x1="0" x2="1" y1="0" y2="0"><stop offset="0" stop-color="#c4c4c4"/><stop offset=".2" stop-color="#f4f4f4"/><stop offset=".45" stop-color="#ffffff"/><stop offset=".8" stop-color="#d0d0d0"/><stop offset="1" stop-color="#b4b4b4"/></linearGradient></defs><path d="M244.3 81H260.5V91H324.8V81H423.6V76.5H435.6V81H439.7V91H436.2V312.8H405V299H354.3V312.8H244.3Z" fill="#b9b9b9"/><rect x="354.3" y="307" width="50.7" height="4.5" fill="#0b1a0b"/><rect x="260.5" y="81" width="64.3" height="10" fill="#000"/><path d="M256 91H398V135.3H427V297.8H329.2V301.3H256Z" fill="#fde7de"/><path clip-path="url(#fl)" d="M414.8 87.5v220.2M252.2 164.9h162.6M344.3 87.5v77.4M284.7 87.5v77.4M268.4 87.5v77.4M257.6 87.5v77.4M252.2 129.2h5.4M252.2 117.3h5.4M252.2 93.5h5.4M257.6 135.2h10.8M263.0 87.5v47.6M257.6 123.2h5.4M263.0 93.5h5.4M263.0 105.4h5.4M263.0 135.2v29.8M257.6 141.1h5.4M263.0 158.9h5.4M268.4 129.2h16.3M273.9 87.5v41.6M268.4 93.5h5.4M273.9 99.5h10.8M279.3 99.5v29.8M279.3 111.3h5.4M279.3 105.4h5.4M279.3 123.2h5.4M268.4 158.9h16.3M273.9 129.2v29.8M268.4 147.1h5.4M268.4 135.2h5.4M273.9 153.0h10.8M301.0 87.5v77.4M284.7 111.3h16.3M290.1 87.5v23.8M290.1 99.5h10.8M295.5 87.5v11.9M290.1 105.4h10.8M284.7 123.2h16.3M284.7 158.9h16.3M284.7 141.1h16.3M284.7 129.2h16.3M295.5 129.2v11.9M290.1 129.2v11.9M284.7 135.2h5.4M295.5 135.2h5.4M295.5 158.9v6.0M322.6 87.5v77.4M301.0 158.9h21.7M317.2 87.5v71.4M301.0 105.4h16.3M311.8 87.5v17.9M301.0 93.5h10.8M306.4 87.5v6.0M311.8 99.5h5.4M301.0 153.0h16.3M301.0 147.1h16.3M301.0 135.2h16.3M306.4 105.4v29.8M301.0 111.3h5.4M301.0 123.2h5.4M306.4 123.2h10.8M306.4 117.3h10.8M311.8 123.2v11.9M306.4 135.2v11.9M301.0 141.1h5.4M311.8 135.2v11.9M306.4 141.1h5.4M317.2 147.1h5.4M317.2 93.5h5.4M317.2 117.3h5.4M317.2 129.2h5.4M306.4 158.9v6.0M322.6 105.4h21.7M322.6 93.5h21.7M322.6 99.5h21.7M338.9 99.5v6.0M322.6 129.2h21.7M322.6 117.3h21.7M333.5 105.4v11.9M322.6 111.3h10.8M328.1 111.3v6.0M322.6 135.2h21.7M333.5 129.2v6.0M322.6 147.1h21.7M322.6 141.1h21.7M328.1 135.2v6.0M333.5 135.2v6.0M333.5 141.1v6.0M328.1 141.1v6.0M338.9 141.1v6.0M322.6 153.0h21.7M322.6 158.9h21.7M338.9 153.0v6.0M333.5 153.0v6.0M387.7 87.5v77.4M344.3 99.5h43.4M360.6 87.5v11.9M371.4 87.5v11.9M376.8 99.5v65.5M344.3 158.9h32.5M344.3 147.1h32.5M344.3 105.4h32.5M355.2 99.5v6.0M371.4 99.5v6.0M344.3 141.1h32.5M355.2 105.4v35.7M344.3 117.3h10.8M344.3 129.2h10.8M344.3 123.2h10.8M344.3 135.2h10.8M355.2 111.3h21.7M366.0 111.3v29.8M355.2 129.2h10.8M360.6 111.3v17.9M360.6 123.2h5.4M366.0 129.2h10.8M371.4 111.3v17.9M355.2 141.1v6.0M344.3 153.0h32.5M360.6 147.1v6.0M376.8 141.1h10.8M382.3 99.5v41.6M376.8 105.4h5.4M376.8 129.2h5.4M382.3 123.2h5.4M382.3 105.4h5.4M382.3 117.3h5.4M382.3 141.1v23.8M376.8 153.0h5.4M376.8 147.1h5.4M409.4 87.5v77.4M387.7 93.5h21.7M387.7 123.2h21.7M387.7 117.3h21.7M387.7 99.5h21.7M403.9 93.5v6.0M393.1 93.5v6.0M387.7 105.4h21.7M398.5 99.5v6.0M398.5 105.4v11.9M403.9 105.4v11.9M387.7 158.9h21.7M387.7 129.2h21.7M398.5 123.2v6.0M387.7 153.0h21.7M387.7 135.2h21.7M393.1 135.2v17.9M387.7 147.1h5.4M403.9 135.2v17.9M393.1 141.1h10.8M398.5 135.2v6.0M398.5 141.1v11.9M403.9 141.1h5.4M301.0 164.9v142.8M263.0 164.9v142.8M252.2 200.6h10.8M252.2 182.8h10.8M257.6 164.9v17.9M252.2 170.8h5.4M257.6 176.8h5.4M257.6 182.8v17.9M257.6 194.7h5.4M252.2 266.1h10.8M257.6 200.6v65.5M252.2 260.1h5.4M252.2 248.2h5.4M252.2 206.6h5.4M252.2 236.3h5.4M252.2 254.1h5.4M257.6 236.3h5.4M257.6 224.4h5.4M257.6 212.5h5.4M257.6 248.2h5.4M252.2 277.9h10.8M257.6 266.1v11.9M252.2 295.8h10.8M252.2 283.9h10.8M257.6 295.8v11.9M263.0 289.9h37.9M263.0 212.5h37.9M263.0 194.7h37.9M284.7 164.9v29.8M273.9 164.9v29.8M263.0 170.8h10.8M268.4 164.9v6.0M263.0 182.8h10.8M263.0 176.8h10.8M273.9 188.7h10.8M273.9 182.8h10.8M279.3 164.9v17.9M273.9 170.8h5.4M279.3 170.8h5.4M284.7 176.8h16.3M295.5 164.9v11.9M284.7 170.8h10.8M290.1 164.9v6.0M263.0 206.6h37.9M263.0 200.6h37.9M273.9 194.7v6.0M268.4 194.7v6.0M284.7 194.7v6.0M273.9 200.6v6.0M268.4 200.6v6.0M284.7 200.6v6.0M279.3 200.6v6.0M295.5 200.6v6.0M290.1 206.6v6.0M284.7 206.6v6.0M263.0 260.1h37.9M279.3 212.5v47.6M263.0 236.3h16.3M273.9 212.5v23.8M268.4 212.5v23.8M273.9 230.4h5.4M273.9 224.4h5.4M263.0 242.2h16.3M268.4 236.3v6.0M273.9 242.2v17.9M268.4 242.2v17.9M268.4 254.1h5.4M284.7 212.5v47.6M284.7 224.4h16.3M284.7 254.1h16.3M290.1 224.4v29.8M290.1 230.4h10.8M295.5 230.4v23.8M290.1 242.2h5.4M290.1 236.3h5.4M290.1 248.2h5.4M284.7 260.1v29.8M279.3 260.1v29.8M268.4 260.1v29.8M263.0 277.9h5.4M263.0 266.1h5.4M268.4 272.0h10.8M273.9 272.0v17.9M268.4 283.9h5.4M273.9 277.9h5.4M273.9 283.9h5.4M284.7 277.9h16.3M284.7 272.0h16.3M284.7 266.1h16.3M263.0 295.8h37.9M295.5 289.9v6.0M268.4 289.9v6.0M290.1 295.8v11.9M273.9 295.8v11.9M301.0 176.8h113.8M311.8 164.9v11.9M306.4 164.9v11.9M387.7 164.9v11.9M355.2 164.9v11.9M349.7 164.9v11.9M311.8 170.8h37.9M338.9 164.9v6.0M333.5 164.9v6.0M328.1 164.9v6.0M322.6 164.9v6.0M376.8 164.9v11.9M360.6 164.9v11.9M360.6 170.8h16.3M366.0 164.9v6.0M409.4 164.9v11.9M360.6 176.8v130.9M344.3 176.8v130.9M301.0 277.9h43.4M301.0 248.2h43.4M301.0 200.6h43.4M306.4 176.8v23.8M301.0 182.8h5.4M301.0 188.7h5.4M306.4 194.7h37.9M306.4 182.8h37.9M328.1 176.8v6.0M333.5 176.8v6.0M311.8 182.8v11.9M311.8 188.7h32.5M322.6 182.8v6.0M328.1 182.8v6.0M322.6 188.7v6.0M333.5 188.7v6.0M338.9 188.7v6.0M317.2 194.7v6.0M322.6 194.7v6.0M328.1 194.7v6.0M301.0 230.4h43.4M338.9 200.6v29.8M311.8 200.6v29.8M301.0 212.5h10.8M311.8 212.5h27.1M333.5 200.6v11.9M322.6 200.6v11.9M333.5 206.6h5.4M322.6 212.5v17.9M317.2 212.5v17.9M317.2 218.4h5.4M322.6 224.4h16.3M328.1 224.4v6.0M338.9 224.4h5.4M338.9 206.6h5.4M301.0 236.3h43.4M322.6 230.4v6.0M317.2 236.3v11.9M301.0 242.2h16.3M338.9 236.3v11.9M311.8 248.2v29.8M301.0 260.1h10.8M306.4 248.2v11.9M306.4 260.1v17.9M301.0 266.1h5.4M311.8 272.0h32.5M322.6 248.2v23.8M311.8 266.1h10.8M311.8 254.1h10.8M317.2 248.2v6.0M317.2 254.1v11.9M328.1 248.2v23.8M328.1 260.1h16.3M328.1 254.1h16.3M328.1 272.0v6.0M322.6 272.0v6.0M333.5 272.0v6.0M301.0 295.8h43.4M311.8 277.9v17.9M306.4 277.9v17.9M301.0 289.9h5.4M306.4 289.9h5.4M338.9 277.9v17.9M328.1 277.9v17.9M311.8 289.9h16.3M317.2 277.9v11.9M311.8 283.9h5.4M333.5 277.9v17.9M333.5 283.9h5.4M338.9 289.9h5.4M322.6 295.8v11.9M322.6 301.8h21.7M333.5 295.8v6.0M333.5 301.8v6.0M328.1 301.8v6.0M344.3 248.2h16.3M344.3 218.4h16.3M355.2 176.8v41.6M344.3 200.6h10.8M349.7 176.8v23.8M349.7 194.7h5.4M349.7 188.7h5.4M344.3 206.6h10.8M355.2 200.6h5.4M344.3 236.3h16.3M349.7 218.4v17.9M349.7 230.4h10.8M355.2 236.3v11.9M349.7 248.2v59.5M344.3 266.1h5.4M344.3 260.1h5.4M344.3 301.8h5.4M344.3 277.9h5.4M344.3 283.9h5.4M344.3 295.8h5.4M349.7 295.8h10.8M355.2 295.8v11.9M360.6 230.4h54.2M393.1 176.8v53.6M371.4 176.8v53.6M360.6 218.4h10.8M366.0 176.8v41.6M360.6 200.6h5.4M360.6 182.8h5.4M360.6 188.7h5.4M366.0 200.6h5.4M387.7 176.8v53.6M371.4 188.7h16.3M371.4 182.8h16.3M371.4 224.4h16.3M371.4 218.4h16.3M382.3 188.7v29.8M376.8 188.7v29.8M371.4 200.6h5.4M371.4 194.7h5.4M382.3 212.5h5.4M376.8 224.4v6.0M393.1 188.7h21.7M398.5 188.7v41.6M393.1 212.5h5.4M393.1 200.6h5.4M393.1 218.4h5.4M393.1 224.4h5.4M403.9 188.7v41.6M398.5 224.4h5.4M403.9 206.6h10.8M409.4 206.6v23.8M409.4 224.4h5.4M409.4 212.5h5.4M409.4 218.4h5.4M376.8 230.4v77.4M360.6 272.0h16.3M360.6 260.1h16.3M360.6 248.2h16.3M366.0 230.4v17.9M360.6 242.2h5.4M371.4 272.0v35.7M366.0 272.0v35.7M371.4 277.9h5.4M371.4 289.9h5.4M403.9 230.4v77.4M393.1 230.4v77.4M376.8 254.1h16.3M376.8 236.3h16.3M376.8 248.2h16.3M382.3 248.2v6.0M376.8 301.8h16.3M376.8 289.9h16.3M376.8 260.1h16.3M376.8 283.9h16.3M387.7 260.1v23.8M376.8 266.1h10.8M387.7 277.9h5.4M387.7 289.9v11.9M393.1 277.9h10.8M398.5 230.4v47.6M393.1 260.1h5.4M393.1 242.2h5.4M393.1 236.3h5.4M398.5 266.1h5.4M398.5 254.1h5.4M398.5 242.2h5.4M398.5 236.3h5.4M398.5 272.0h5.4M393.1 301.8h10.8M393.1 283.9h10.8M393.1 295.8h10.8M398.5 295.8v6.0M409.4 230.4v77.4M409.4 260.1h5.4M409.4 248.2h5.4M414.8 230.4h16.3M414.8 170.8h16.3M414.8 99.5h16.3M414.8 93.5h16.3M420.2 99.5v71.4M414.8 141.1h5.4M414.8 117.3h5.4M414.8 135.2h5.4M414.8 129.2h5.4M414.8 164.9h5.4M420.2 164.9h10.8M420.2 129.2h10.8M425.6 99.5v29.8M425.6 117.3h5.4M420.2 158.9h10.8M420.2 153.0h10.8M420.2 141.1h10.8M420.2 147.1h10.8M414.8 176.8h16.3M425.6 170.8v6.0M420.2 176.8v53.6M414.8 224.4h5.4M414.8 188.7h5.4M414.8 200.6h5.4M425.6 176.8v53.6M420.2 224.4h5.4M420.2 200.6h5.4M425.6 182.8h5.4M414.8 283.9h16.3M414.8 242.2h16.3M414.8 236.3h16.3M414.8 272.0h16.3M420.2 242.2v29.8M414.8 248.2h5.4M414.8 254.1h5.4M414.8 260.1h5.4M425.6 242.2v29.8M414.8 277.9h16.3M420.2 277.9v6.0M420.2 283.9v23.8M414.8 289.9h5.4M414.8 295.8h5.4M425.6 283.9v23.8M425.6 295.8h5.4" stroke="#e8ccb9" stroke-width=".8" fill="none"/><rect x="344" y="91.8" width="54" height="8.7" fill="#e6c6a4"/><path d="M325.8 100.3L398 91.6" stroke="#fff" stroke-width=".6"/><rect x="308.9" y="92" width="16.4" height="5.4" fill="#fff"/><rect x="325.3" y="92" width="18.7" height="5.4" fill="#3c3c3c"/><rect x="404.9" y="136" width="20.6" height="94" fill="url(#cab)"/><path d="M404.9 154h20.6" stroke="#fff" stroke-width=".7"/><path d="M404.9 173h20.6" stroke="#fff" stroke-width=".7"/><path d="M404.9 192.2h20.6" stroke="#fff" stroke-width=".7"/><path d="M404.9 211.5h20.6" stroke="#fff" stroke-width=".7"/><rect x="257" y="140.8" width="19.6" height="160" fill="url(#wd)"/><path d="M276.6 278.7H340.6V297.2H329.8V300.6H276.6Z" fill="url(#wd)"/><path d="M257 170.5h19.6" stroke="#f6e6de" stroke-width=".7"/><path d="M257 200.4h19.6" stroke="#f6e6de" stroke-width=".7"/><path d="M257 230.2h19.6" stroke="#f6e6de" stroke-width=".7"/><path d="M257 260h19.6" stroke="#f6e6de" stroke-width=".7"/><path d="M276.8 278.7V300.6M304.5 278.7V300.6M332.6 278.7V297.2M276.8 278.9H340.6" stroke="#f6e6de" stroke-width=".6" fill="none"/><rect x="356.7" y="243.7" width="54.6" height="27.3" fill="url(#wd2)"/><rect x="357.4" y="244.6" width="2.2" height="2.6" fill="#fff"/><rect x="407.6" y="244.6" width="2.2" height="2.6" fill="#fff"/><path d="M261.6 145.5q-2 10.5 0 21q.6-10.5 0-21z" fill="#fff" stroke="#fff" stroke-width=".5"/><rect x="262" y="152" width="2.1" height="8.6" fill="#111"/><rect x="264.1" y="150" width="1.2" height="12.5" fill="#f4f4f4"/><rect x="266.6" y="147" width="5" height="18.5" fill="#fff" stroke="#c9c9c9" stroke-width=".3"/><path d="M269 149v15" stroke="#bbb" stroke-width=".4"/><rect x="267.8" y="144.4" width="2.6" height="2.4" rx=".8" fill="#f4f4f4" stroke="#999" stroke-width=".3"/><path d="M277.3 148.5q4-1.5 5.8 1.5q1 6.5-.2 13q-2 3-5.6 1.5z" fill="#6878e0"/><path d="M279.6 149.5q1.2 7 0 14M281.6 150q1 6.5 0 13" stroke="#eef0ff" stroke-width=".7" fill="none"/><path d="M283.3 148.2l1.2-.6M283.3 164.8l1.2 .6" stroke="#445" stroke-width=".5"/><path d="M261.6 175.5q-2 10.5 0 21q.6-10.5 0-21z" fill="#fff" stroke="#fff" stroke-width=".5"/><rect x="262" y="182" width="2.1" height="8.6" fill="#111"/><rect x="264.1" y="180" width="1.2" height="12.5" fill="#f4f4f4"/><rect x="266.6" y="177" width="5" height="18.5" fill="#fff" stroke="#c9c9c9" stroke-width=".3"/><path d="M269 179v15" stroke="#bbb" stroke-width=".4"/><rect x="267.8" y="174.4" width="2.6" height="2.4" rx=".8" fill="#f4f4f4" stroke="#999" stroke-width=".3"/><path d="M277.3 178.5q4-1.5 5.8 1.5q1 6.5-.2 13q-2 3-5.6 1.5z" fill="#6878e0"/><path d="M279.6 179.5q1.2 7 0 14M281.6 180q1 6.5 0 13" stroke="#eef0ff" stroke-width=".7" fill="none"/><path d="M283.3 178.2l1.2-.6M283.3 194.8l1.2 .6" stroke="#445" stroke-width=".5"/><path d="M261.6 205.5q-2 10.5 0 21q.6-10.5 0-21z" fill="#fff" stroke="#fff" stroke-width=".5"/><rect x="262" y="212" width="2.1" height="8.6" fill="#111"/><rect x="264.1" y="210" width="1.2" height="12.5" fill="#f4f4f4"/><rect x="266.6" y="207" width="5" height="18.5" fill="#fff" stroke="#c9c9c9" stroke-width=".3"/><path d="M269 209v15" stroke="#bbb" stroke-width=".4"/><rect x="267.8" y="204.4" width="2.6" height="2.4" rx=".8" fill="#f4f4f4" stroke="#999" stroke-width=".3"/><path d="M277.3 208.5q4-1.5 5.8 1.5q1 6.5-.2 13q-2 3-5.6 1.5z" fill="#6878e0"/><path d="M279.6 209.5q1.2 7 0 14M281.6 210q1 6.5 0 13" stroke="#eef0ff" stroke-width=".7" fill="none"/><path d="M283.3 208.2l1.2-.6M283.3 224.8l1.2 .6" stroke="#445" stroke-width=".5"/><path d="M261.6 235.5q-2 10.5 0 21q.6-10.5 0-21z" fill="#fff" stroke="#fff" stroke-width=".5"/><rect x="262" y="242" width="2.1" height="8.6" fill="#111"/><rect x="264.1" y="240" width="1.2" height="12.5" fill="#f4f4f4"/><rect x="266.6" y="237" width="5" height="18.5" fill="#fff" stroke="#c9c9c9" stroke-width=".3"/><path d="M269 239v15" stroke="#bbb" stroke-width=".4"/><rect x="267.8" y="234.4" width="2.6" height="2.4" rx=".8" fill="#f4f4f4" stroke="#999" stroke-width=".3"/><path d="M277.3 238.5q4-1.5 5.8 1.5q1 6.5-.2 13q-2 3-5.6 1.5z" fill="#6878e0"/><path d="M279.6 239.5q1.2 7 0 14M281.6 240q1 6.5 0 13" stroke="#eef0ff" stroke-width=".7" fill="none"/><path d="M283.3 238.2l1.2-.6M283.3 254.8l1.2 .6" stroke="#445" stroke-width=".5"/><path d="M276.8 153.6H307.4V233.1H276.8" fill="none" stroke="#6c6c6c" stroke-width=".6"/><path d="M279.5 153.6L307.4 233.1M307.4 153.6L277.5 233.1" stroke="#6c6c6c" stroke-width=".6"/><path d="M284.6 277.6q-.6-3.2 2-4.6q6.5-1.6 13 0q2.6 1.4 2 4.6z" fill="#6878e0"/><path d="M285.5 275.2q7.5-1.6 15 0M286.0 276.7q7-1.4 14 0" stroke="#e4e8ff" stroke-width=".5" fill="none"/><path d="M286.4 272.4l-.6-1.6M299.8 272.4l.6-1.6" stroke="#556" stroke-width=".5"/><rect x="281.8" y="283" width="18.8" height="5" fill="#fff" stroke="#c4c4c4" stroke-width=".3"/><path d="M284.0 285.5h15" stroke="#bbb" stroke-width=".4"/><rect x="279.8" y="284" width="2.2" height="2.6" rx=".8" fill="#f4f4f4" stroke="#999" stroke-width=".3"/><rect x="287.4" y="290.6" width="10.6" height="2.6" fill="#111"/><path d="M283.0 293.4h19.4q-9.7 2.6-19.4 0z" fill="#fff"/><path d="M312.20000000000005 277.6q-.6-3.2 2-4.6q6.5-1.6 13 0q2.6 1.4 2 4.6z" fill="#6878e0"/><path d="M313.1 275.2q7.5-1.6 15 0M313.6 276.7q7-1.4 14 0" stroke="#e4e8ff" stroke-width=".5" fill="none"/><path d="M314.0 272.4l-.6-1.6M327.40000000000003 272.4l.6-1.6" stroke="#556" stroke-width=".5"/><rect x="309.40000000000003" y="283" width="18.8" height="5" fill="#fff" stroke="#c4c4c4" stroke-width=".3"/><path d="M311.6 285.5h15" stroke="#bbb" stroke-width=".4"/><rect x="307.40000000000003" y="284" width="2.2" height="2.6" rx=".8" fill="#f4f4f4" stroke="#999" stroke-width=".3"/><rect x="315.0" y="290.6" width="10.6" height="2.6" fill="#111"/><path d="M310.6 293.4h19.4q-9.7 2.6-19.4 0z" fill="#fff"/><rect x="259.2" y="283.8" width="13.400" height="15" rx="1" fill="#e4e2e0" stroke="#c4c0bc" stroke-width=".5"/><rect x="260.400" y="285" width="11" height="6" fill="#cfcdcb" stroke="#b8b8b8" stroke-width=".4"/><rect x="260.800" y="292.600" width="10.200" height="4.400" fill="#fff" stroke="#c8c8c8" stroke-width=".4"/><path d="M375.6 250h19.800q-9.900 2.600-19.800 0z" fill="#fff"/><rect x="379.4" y="250.800" width="12.200" height="4.600" fill="#fff"/><rect x="380.400" y="251.400" width="10.200" height="3.400" fill="#111"/><rect x="377" y="257" width="17.4" height="6" fill="#fff" stroke="#c4c4c4" stroke-width=".3"/><path d="M386 260h4" stroke="#999" stroke-width=".4"/><rect x="394.6" y="257.6" width="2" height="4.6" rx=".8" fill="#f4f4f4" stroke="#999" stroke-width=".3"/><rect x="377" y="273.8" width="15.6" height="15" rx="3.5" fill="#6878e0"/><path d="M377 288.4q7.8 3.4 15.6 0l.4 1.8q-8.2 3-16.4 0z" fill="#5868d4"/><path d="M375.2 279q-1 2.5 0 5M394.4 279q1 2.5 0 5" stroke="#fff" stroke-width="1" fill="none"/><path d="M378 292.6h1.6M390 292.6h1.6M384 272.6h1.6" stroke="#444" stroke-width=".6"/><path d="M276 91H256.05V301.6H329.2V297.9H427.2V135.5H398.1V91H304" fill="none" stroke="#e30f0f" stroke-width="1.75" stroke-linejoin="miter"/><rect x="261.4" y="86" width="9.6" height="2.8" fill="#4a4a4a"/><rect x="260.5" y="85.2" width=".9" height="4.4" fill="#ddd"/><rect x="271" y="85.4" width="1.4" height="4.6" fill="#eee"/><circle cx="274" cy="87.8" r="1.7" fill="#1a1a1a" stroke="#444" stroke-width=".4"/><rect x="309" y="86" width="14.4" height="2.8" fill="#4a4a4a"/><rect x="323.4" y="85.2" width="1.3" height="4.4" fill="#ddd"/><rect x="307.5" y="85.4" width="1.4" height="4.6" fill="#eee"/><circle cx="305.8" cy="87.8" r="1.7" fill="#1a1a1a" stroke="#444" stroke-width=".4"/><text x="262.6" y="72.7" font-size="5.1" fill="#d4d9e6" textLength="43.5" lengthAdjust="spacingAndGlyphs">New door set within</text><text x="262.6" y="78.6" font-size="5.1" fill="#d4d9e6" textLength="62.2" lengthAdjust="spacingAndGlyphs">acoustic robust construction</text><path d="M290 80L308 84.2" stroke="#c8c8c8" stroke-width=".5"/><path d="M307 82.6L313.8 85.6L306.6 85.8Z" fill="#fff"/><path d="M276.700 92V121.800" stroke="#fff" stroke-width=".6" fill="none"/><path d="M305.300 92.600A28.600 29.400 0 0 1 276.700 121.800" stroke="#fff" stroke-width=".6" fill="none"/><text x="309.4" y="105.200" fill="#ffffff" stroke="#ffffff" stroke-width=".2" font-size="6.8" textLength="11.3" lengthAdjust="spacingAndGlyphs">RAD</text><text x="325" y="118.6" fill="#ffffff" stroke="#ffffff" stroke-width=".2" font-size="6" textLength="31.4" lengthAdjust="spacingAndGlyphs">Spur Shelving</text><path d="M356.6 116.8H362V104.5" stroke="#fff" stroke-width=".5" fill="none"/><path d="M362 103l-.8 4h1.6z" fill="#fff"/><text x="310.5" y="147.2" fill="#ffffff" stroke="#ffffff" stroke-width=".2" font-size="6" textLength="41.3" lengthAdjust="spacingAndGlyphs"># Anti-static carpet</text><text x="323.2" y="163.2" fill="#ffffff" stroke="#ffffff" stroke-width=".2" font-size="6" textLength="58.7" lengthAdjust="spacingAndGlyphs">Conduit to have separate</text><text x="323.2" y="168.6" fill="#ffffff" stroke="#ffffff" stroke-width=".2" font-size="6" textLength="23" lengthAdjust="spacingAndGlyphs">Tray fitted</text><path d="M309 161.3H322.5" stroke="#fff" stroke-width=".5"/><path d="M309 161.3l3.6-.9v1.8z" fill="#fff"/><text x="344.5" y="184.4" fill="#ffffff" stroke="#ffffff" stroke-width=".2" font-size="6" textLength="41.5" lengthAdjust="spacingAndGlyphs">See Filing Cabinets</text><path d="M386.5 182.5H403" stroke="#fff" stroke-width=".5"/><path d="M404.6 182.5l-4.4-1v2z" fill="#fff"/><text x="312" y="208.9" fill="#ffffff" stroke="#ffffff" stroke-width=".2" font-size="6" textLength="43" lengthAdjust="spacingAndGlyphs">See Work Station</text><path d="M277.5 207H311.5" stroke="#fff" stroke-width=".5"/><path d="M277.5 207l3.6-.9v1.8z" fill="#fff"/><path d="M322.7 211L303 277" stroke="#fff" stroke-width=".5"/><text x="287.9" y="240.6" font-size="5.6" fill="#6a6a6a" textLength="8.6" lengthAdjust="spacingAndGlyphs">R/L</text><text x="405.6" y="152.6" font-size="5" fill="#fff">6</text><text x="405.6" y="171.6" font-size="5" fill="#fff">4</text><text x="405.6" y="190.6" font-size="5" fill="#fff">3</text><text x="405.6" y="209.6" font-size="5" fill="#fff">2</text><text x="405.6" y="228.6" font-size="5" fill="#fff">1</text></svg>
<div class="a" style="left:37.8px;top:315.4px;width:586.8px;height:8.4px;background:#f0f0f0"></div>
<div class="a" style="left:37.8px;top:315.6px;width:8.6px;height:7.6px;background:#f3f3f3;border:0.5px solid #fff;border-right-color:#8f8f8f;border-bottom-color:#8f8f8f;box-sizing:border-box"></div>
<div class="a" style="left:46.4px;top:315.6px;width:8.6px;height:7.6px;background:#f3f3f3;border:0.5px solid #fff;border-right-color:#8f8f8f;border-bottom-color:#8f8f8f;box-sizing:border-box"></div>
<div class="a" style="left:55px;top:315.6px;width:8.6px;height:7.6px;background:#f3f3f3;border:0.5px solid #fff;border-right-color:#8f8f8f;border-bottom-color:#8f8f8f;box-sizing:border-box"></div>
<div class="a" style="left:63.6px;top:315.6px;width:8.6px;height:7.6px;background:#f3f3f3;border:0.5px solid #fff;border-right-color:#8f8f8f;border-bottom-color:#8f8f8f;box-sizing:border-box"></div>
<svg class="a" style="left:37.8px;top:315.6px" width="34.4" height="7.6" viewBox="0 0 34.4 7.6"><path d="M3 1.8v4M5.9 1.8v4l-2.6-2zM14.2 1.8v4l-2.6-2zM20.4 1.8v4l2.6-2zM28.6 1.8v4l2.6-2zM31.5 1.8v4" fill="#111" stroke="#111" stroke-width=".7"/></svg>
<svg class="a" style="left:73px;top:315.4px" width="50" height="8.4" viewBox="0 0 50 8.4"><path d="M0 0L3 7.8H20L23 0Z" fill="#000"/><path d="M22.4 .3L24.6 7.4H44L46.4 .3" fill="#f6f6f6" stroke="#333" stroke-width=".6"/></svg>
<div class="t" style="left:77.5px;top:316.2px;font-size:6.3px;color:#e4e8f0;transform:scaleX(0.763);">Model</div>
<div class="t" style="left:97.2px;top:316.2px;font-size:6.3px;color:#333;transform:scaleX(0.803);">Layout1</div>
<div class="a" style="left:0px;top:324px;width:650px;height:44px;background:#f0f0f0"></div>
<div class="a" style="left:0px;top:325.6px;width:650px;height:1.2px;background:#b4b4b4"></div>
<div class="a" style="left:0px;top:326.8px;width:650px;height:0.8px;background:#fdfdfd"></div>
<div class="a" style="left:3.6px;top:332px;width:0.8px;height:33.39999999999998px;background:#bcbcbc"></div>
<div class="a" style="left:4.4px;top:332px;width:0.8px;height:33.39999999999998px;background:#fff"></div>
<div class="a" style="left:5.6px;top:332px;width:0.8px;height:33.39999999999998px;background:#bcbcbc"></div>
<div class="a" style="left:6.3999999999999995px;top:332px;width:0.8px;height:33.39999999999998px;background:#fff"></div>
<div class="a" style="left:7.4px;top:331.6px;width:639.4px;height:34px;background:#fff;border:0.6px solid #a0a0a0;border-bottom-color:#c4c4c4;border-right-color:#c4c4c4;box-sizing:border-box"></div>
<div class="a" style="left:8.5px;top:356px;width:629px;height:0.6px;background:#9a9a9a"></div>
<div class="t" style="left:9.3px;top:335.1px;font-size:7px;color:#222;transform:scaleX(0.892);font-family:'Liberation Mono',monospace;">or Autodesk licensed application.</div>
<div class="t" style="left:9.3px;top:343.3px;font-size:7px;color:#222;transform:scaleX(0.895);font-family:'Liberation Mono',monospace;">Command: COMMANDLINE</div>
<div class="t" style="left:9.3px;top:359px;font-size:7px;color:#222;transform:scaleX(0.869);font-family:'Liberation Mono',monospace;">Command:</div>
<div class="a" style="left:639.4px;top:332.2px;width:7px;height:24px;background:#f2f2f2;border-left:0.5px solid #ddd;box-sizing:border-box"></div>
<svg class="a" style="left:639.4px;top:332.2px" width="7" height="24" viewBox="0 0 7 24"><path d="M2.1 6.4h2.8l-1.400-1.800zM2.1 18.800h2.800l-1.400 1.800z" fill="#444"/></svg>
<div class="a" style="left:607.4px;top:356.6px;width:32px;height:8.6px;background:#f0f0f0"></div>
<div class="a" style="left:615px;top:357px;width:7.4px;height:8px;background:linear-gradient(#f6f6f6,#dcdcdc);border:0.5px solid #a4a4a4;border-radius:1px;box-sizing:border-box"></div>
<svg class="a" style="left:607.4px;top:356.6px" width="32" height="8.600" viewBox="0 0 32 8.600"><path d="M4.600 2.800v3l-1.800-1.500zM26 2.800v3l1.800-1.500z" fill="#444"/></svg>
<div class="a" style="left:0px;top:367.6px;width:650px;height:11.6px;background:#f0f0f0"></div>
<div class="a" style="left:2px;top:369.8px;width:104.5px;height:9px;border:0.5px solid #9a9a9a;border-right-color:#fff;border-bottom-color:#fff;box-sizing:border-box"></div>
<div class="t" style="left:4px;top:371.4px;font-size:7.2px;color:#222;transform:scaleX(0.712);">113407.5424, 91190.6696, 0.0000</div>
<div class="sb up" style="left:107.4px;width:16.599999999999994px"></div>
<div class="t" style="left:110px;top:371.4px;font-size:7.2px;color:#222;transform:scaleX(0.643);">SNAP</div>
<div class="sb up" style="left:124px;width:17px"></div>
<div class="t" style="left:127px;top:371.4px;font-size:7.2px;color:#222;transform:scaleX(0.7);">GRID</div>
<div class="sb up" style="left:141px;width:22.599999999999994px"></div>
<div class="t" style="left:143.6px;top:371.4px;font-size:7.2px;color:#222;transform:scaleX(0.696);">ORTHO</div>
<div class="sb up" style="left:163.6px;width:21.400000000000006px"></div>
<div class="t" style="left:166px;top:371.4px;font-size:7.2px;color:#222;transform:scaleX(0.696);">POLAR</div>
<div class="sb dn" style="left:185.2px;width:21.200000000000017px"></div>
<div class="t" style="left:187.6px;top:371.9px;font-size:7.2px;color:#222;transform:scaleX(0.666);">OSNAP</div>
<div class="sb up" style="left:206.4px;width:25.19999999999999px"></div>
<div class="t" style="left:208px;top:371.4px;font-size:7.2px;color:#222;transform:scaleX(0.707);">OTRACK</div>
<div class="sb dn" style="left:231.8px;width:17.799999999999983px"></div>
<div class="t" style="left:233.7px;top:371.9px;font-size:7.2px;color:#222;transform:scaleX(0.701);">DUCS</div>
<div class="sb up" style="left:249.6px;width:14.799999999999983px"></div>
<div class="t" style="left:251.7px;top:371.4px;font-size:7.2px;color:#222;transform:scaleX(0.658);">DYN</div>
<div class="sb dn" style="left:264.6px;width:14.799999999999955px"></div>
<div class="t" style="left:266.7px;top:371.9px;font-size:7.2px;color:#222;transform:scaleX(0.737);">LWT</div>
<div class="sb dn" style="left:279.8px;width:21.19999999999999px"></div>
<div class="t" style="left:281.7px;top:371.9px;font-size:7.2px;color:#222;transform:scaleX(0.683);">MODEL</div>
<svg class="a" style="left:600.55px;top:370.35px" width="8.5" height="8.5" viewBox="0 0 10 10"><circle cx="5" cy="3.8" r="2.4" fill="#7f9fd0"/><path d="M2 9q0-3 3-3t3 3z" fill="#5f7fb4"/><path d="M7 2l2-1" stroke="#889" stroke-width=".8"/></svg>
<svg class="a" style="left:610.75px;top:370.35px" width="8.5" height="8.5" viewBox="0 0 10 10"><rect x="2" y="4.5" width="6" height="4.5" fill="#d8b43a" stroke="#8a6a1c" stroke-width=".5"/><path d="M3.2 4.5v-1.6q0-1.6 1.8-1.6t1.8 1.6" fill="none" stroke="#8a7a3a" stroke-width=".9"/></svg>
<svg class="a" style="left:620.55px;top:370.35px" width="8.5" height="8.5" viewBox="0 0 10 10"><rect x="1.5" y="1.5" width="5.5" height="7" fill="#dfe6f0" stroke="#4a5a78" stroke-width=".6"/><circle cx="7" cy="7" r="2.2" fill="#3aa050"/><path d="M6 7l.8.8l1.4-1.6" stroke="#fff" stroke-width=".6" fill="none"/></svg>
<svg class="a" style="left:631.00px;top:370.60px" width="8" height="8" viewBox="0 0 10 10"><path d="M3.5 4.2h3l-1.5 1.8z" fill="#333"/></svg>
<div class="a" style="left:640px;top:370.2px;width:8.5px;height:7.8px;background:#8fb4dc;border:0.8px solid #3f6fa8;box-sizing:border-box"></div>
<div class="a" style="left:0px;top:379.6px;width:650px;height:20.4px;background:linear-gradient(#5f95bd 0,#02619f 5%,#02619f 100%)"></div>
<div class="a" style="left:88px;top:380.2px;width:25.4px;height:19.8px;background:linear-gradient(#5d9ccb,#3a82b8 50%,#2f78b0);border:0.6px solid #8fbadb;border-bottom:none;border-radius:1.5px;box-sizing:border-box"></div>
<div class="a" style="left:147.2px;top:380.2px;width:27px;height:19.8px;background:linear-gradient(#5d9ccb,#3a82b8 50%,#2f78b0);border:0.6px solid #8fbadb;border-bottom:none;border-radius:1.5px;box-sizing:border-box"></div>
<div class="a" style="left:235.6px;top:380.2px;width:27px;height:19.8px;background:linear-gradient(#5d9ccb,#3a82b8 50%,#2f78b0);border:0.6px solid #8fbadb;border-bottom:none;border-radius:1.5px;box-sizing:border-box"></div>
<div class="a" style="left:353px;top:380.2px;width:27.6px;height:19.8px;background:linear-gradient(#5d9ccb,#3a82b8 50%,#2f78b0);border:0.6px solid #8fbadb;border-bottom:none;border-radius:1.5px;box-sizing:border-box"></div>
<svg class="a" style="left:0;top:379.6px" width="650" height="20.4" viewBox="0 379.6 650 20.4" font-family="Liberation Sans,sans-serif"><defs><radialGradient id="orb" cx=".5" cy=".35" r=".7"><stop offset="0" stop-color="#b4dcf4"/><stop offset=".5" stop-color="#3f8cc8"/><stop offset="1" stop-color="#0f4c8c"/></radialGradient></defs><circle cx="12.8" cy="390.8" r="9" fill="url(#orb)" stroke="#9fcdea" stroke-width=".7"/><ellipse cx="12.8" cy="397" rx="6" ry="2.600" fill="#5fd0f0" opacity=".55"/><path d="M7.200 386.200q2.600-1.400 5-.3l-.6 4.300q-2.400-1-4.800.4z" fill="#f0582c"/><path d="M13 386.200q2.600 1.200 5.200-.2l-.5 4.300q-2.600 1.300-5.200.1z" fill="#8fd03c"/><path d="M6.600 391.300q2.500-1.400 4.900-.3l-.6 4.300q-2.400-1-4.800.4z" fill="#3fa4ec"/><path d="M12.400 391.300q2.600 1.200 5.200-.1l-.5 4.300q-2.600 1.300-5.200.1z" fill="#fcd02c"/><rect x="37" y="382" width="10.600" height="15.800" rx=".8" fill="#dcecf8" stroke="#8fb4d8" stroke-width=".5"/><rect x="38.200" y="383.200" width="8.200" height="3.400" fill="#f8fbfe"/><rect x="43.800" y="383.600" width="2.400" height="1.400" fill="#f0a040"/><path d="M38.600 388.800h7.600M38.600 391.400h7.600M38.600 394h7.600" stroke="#6fa8dc" stroke-width="1.500" stroke-dasharray="1.800 1.100"/><rect x="44.200" y="393" width="2.200" height="3.400" fill="#f09838"/><text x="72" y="396.600" font-size="22" font-weight="bold" fill="#5cc2f4" text-anchor="middle" font-style="italic">e</text><path d="M65.200 396.400q-1.600-4.400 4.600-10q5.400-4.400 9-2.800q-4-.4-8.400 3.600q-4.800 4.400-5.200 9.200z" fill="#f8d044" stroke="#f4c83c" stroke-width=".5"/><path d="M92.300 385.400h5.400l1.400 1.600h9v12.600h-15.800z" fill="#f4dc8c" stroke="#d0ac48" stroke-width=".5"/><rect x="93" y="388.400" width="14.400" height="11" fill="#fbedb4"/><rect x="95.600" y="391.800" width="9.200" height="7.200" rx="1" fill="#8fc4ec" stroke="#5f98cc" stroke-width=".4"/><rect x="97" y="395.400" width="6.400" height="2" fill="#e8f4fc"/><rect x="94.600" y="384" width="2" height="1.500" fill="#5fae3c"/><rect x="97.400" y="384" width="2" height="1.500" fill="#e05030"/><rect x="100.200" y="384" width="2" height="1.500" fill="#3f84d4"/><rect x="123.300" y="381.600" width="15.400" height="15.400" fill="#ece8e6"/><text x="131" y="396.200" font-size="17.500" font-weight="bold" fill="#c4222c" text-anchor="middle">A</text><rect x="153.200" y="382" width="14.400" height="15.600" fill="#1f8c80" stroke="#bfe4dc" stroke-width=".7"/><text x="158.600" y="395" font-size="12.500" fill="#f4fbf8" text-anchor="middle">A</text><path d="M163.400 384v10.500M165.600 384v10.500M155 396h11.500" stroke="#e4f4f0" stroke-width=".8"/><circle cx="164.400" cy="392.400" r="1.700" fill="#9fd4c8" stroke="#eef" stroke-width=".4"/><rect x="188" y="383.2" width="9" height="14" fill="#fff"/><path d="M190 386h6M190 388.6h6M190 391.2h6M190 393.8h6" stroke="#2b5fb4" stroke-width=".9"/><rect x="183" y="384.600" width="9" height="11.200" fill="#2a4c9c"/><text x="187.7" y="393.4" font-size="8" font-weight="bold" fill="#fff" text-anchor="middle">W</text><circle cx="219.4" cy="390.4" r="7.6" fill="#e8c030"/><path d="M219.4 390.4L212.8 386.6A7.6 7.6 0 0 1 226 386.6Z" fill="#dc4434"/><path d="M219.4 382.8A7.6 7.6 0 0 1 226 386.6H219.4Z" fill="#dc4434"/><path d="M219.4 390.4L212.8 386.6A7.6 7.6 0 0 0 219.4 398L222.8 392Z" fill="#3fa854"/><circle cx="219.4" cy="390.4" r="3.5" fill="#f4f4f4"/><circle cx="219.4" cy="390.4" r="2.7" fill="#3f84e4"/><circle cx="249" cy="390.6" r="7.4" fill="#f08a24"/><circle cx="249.6" cy="389.6" r="4.4" fill="#3a5ec4"/><path d="M242 388q1.5-5 7-5.6q-2.5 2.6-1 5q3 .6 3.6 3.2q-1.4 3.6-5.4 2.6q-3-1.2-4.2-5.2z" fill="#f8c030"/><path d="M242.2 392q3 6.6 9.6 5.2q4.6-1.8 4.6-7.2q-1.6 6-7.8 5.6q-4.4-.4-6.400-3.6z" fill="#e4481c"/><rect x="272.400" y="383.200" width="13" height="14" fill="#0a1c3c" stroke="#3fa8f0" stroke-width=".9"/><text x="278.900" y="393.600" font-size="8.500" font-weight="bold" fill="#5fbcf8" text-anchor="middle">Ps</text><path d="M308.2 382.2l4.8 13.6h-9.6z" fill="#f08a1c"/><path d="M306.4 387.2h3.6l.8 2.4h-5.2zM305 391.4h6.400l.8 2.2h-8z" fill="#f4f4f4"/><path d="M301.4 395.2h13.600l.8 2.600h-15.2z" fill="#e87a14"/><path d="M330 386.800l9-3l4 10l-9 3z" fill="#a4d878"/><path d="M334.400 385.600l11 1.600l-1.600 10.400l-11-1.600z" fill="#f6e478"/><path d="M360.6 397.4v-7l3.600-2.400l3.600 2.400v-4.400l4.400-2l4 2v11.400z" fill="#0c2f5c"/><path d="M362 397.400v-5l2.200-1.400v6.400zM369 397.400v-9.400l1.800-.8v10.200z" fill="#2f8ae0"/><path d="M368.600 384v-3.400h4.400l-1 1.200l1 1.200h-3.800" fill="#3f84d4" stroke="#2f6ab0" stroke-width=".3"/><ellipse cx="464.8" cy="390.4" rx="2.800" ry="4.600" fill="#1c4c9c"/><path d="M463.400 388.400l2.800 3.600l-1.400 1.400v-6l1.400 1.400l-2.800 3.200" stroke="#fff" stroke-width=".6" fill="none"/><circle cx="476" cy="390.400" r="4.200" fill="#e8e8e8"/><circle cx="476" cy="390.400" r="3.600" fill="#d8202c"/><circle cx="476.200" cy="391" r="1.500" fill="none" stroke="#fff" stroke-width=".8"/><path d="M474.800 388v3" stroke="#fff" stroke-width=".8"/><path d="M482.600 390.400l3-2.400l3 2.400l-3 2.400z" fill="#5fb43c"/><path d="M484 391.400l3 1.400l-2 1.400z" fill="#f4d43c"/><circle cx="487.400" cy="389" r="1.200" fill="#e84c2c"/><text x="498" y="393.600" font-size="7.500" fill="#3f9ae8" text-anchor="middle">A</text><path d="M507.600 391.400h6.400v3.400h-6.400z" fill="#3fd4e4"/><circle cx="510.800" cy="389.600" r="1.900" fill="#3fd4e4"/><path d="M510.800 387.600v-1.800h1.800" stroke="#3fd4e4" stroke-width=".7" fill="none"/><rect x="509.400" y="392.200" width="2.800" height="1.600" fill="#e8fcff"/><rect x="518" y="388" width="8" height="5.400" rx=".8" fill="#6fb41c"/><path d="M519.400 390.700q2.400-2.200 5 0q-2.600 2-5 0z" fill="#0c5c1c"/><rect x="529.600" y="386.600" width="7.400" height="8" rx="1" fill="#2f74e0"/><path d="M533.300 387.600v6M530.800 389.200l5 2.800M535.800 389.200l-5 2.800" stroke="#fff" stroke-width=".7"/><path d="M540.800 389.400l6.400-2l2.400 4.400l-6.400 2.600z" fill="#c8ccd0"/><circle cx="546.800" cy="393" r="1.800" fill="#3fb44c"/><rect x="553" y="386.200" width="7.200" height="8.600" rx="1.600" fill="#e02c3c"/><path d="M555.600 388.200q-1.400 2.300 0 4.600M557.600 388.200q1.400 2.300 0 4.600" stroke="#fff" stroke-width=".8" fill="none"/><path d="M563.400 394.400h1.400v-1.600h-1.400zM565.400 394.400h1.400v-3h-1.400zM567.400 394.400h1.400v-4.600h-1.400zM569.400 394.400h1.400v-6.400h-1.400z" fill="#f4f4f4"/><path d="M576.800 386.800v8" stroke="#f4f4f4" stroke-width=".8"/><path d="M577.200 387.200q1.400-.8 2.600 0t2.600 0v3.600q-1.400.8-2.600 0t-2.600 0z" fill="#f4f4f4"/><rect x="586.800" y="386.400" width="5.600" height="8.400" rx=".6" fill="#f0f0f0"/><rect x="588.400" y="385.400" width="2.400" height="1.200" fill="#f0f0f0"/><path d="M588 390.400h3.600M589.800 388.600v3.600" stroke="#456" stroke-width=".7"/><path d="M592.400 388.400l1.800 1v3" stroke="#ddd" stroke-width=".7" fill="none"/><path d="M598 389.400h1.800l2.400-2.400v7.400l-2.400-2.400h-1.800z" fill="#f4f4f4"/><path d="M603.400 388.400q1.400 2 0 4M604.800 387.200q2.200 3.200 0 6.400" stroke="#f4f4f4" stroke-width=".6" fill="none"/><text x="614" y="388.600" font-size="6.300" fill="#eef3f8" textLength="23.600" lengthAdjust="spacingAndGlyphs">10:58 AM</text><text x="613" y="396.800" font-size="6.300" fill="#eef3f8" textLength="26" lengthAdjust="spacingAndGlyphs">5/28/2018</text></svg>
<div class="a" style="left:644.6px;top:380px;width:5.4px;height:20px;background:linear-gradient(90deg,#5f9cc8,#3a80b4);border-left:0.6px solid #9cc4e0;box-sizing:border-box"></div>
</body></html>
